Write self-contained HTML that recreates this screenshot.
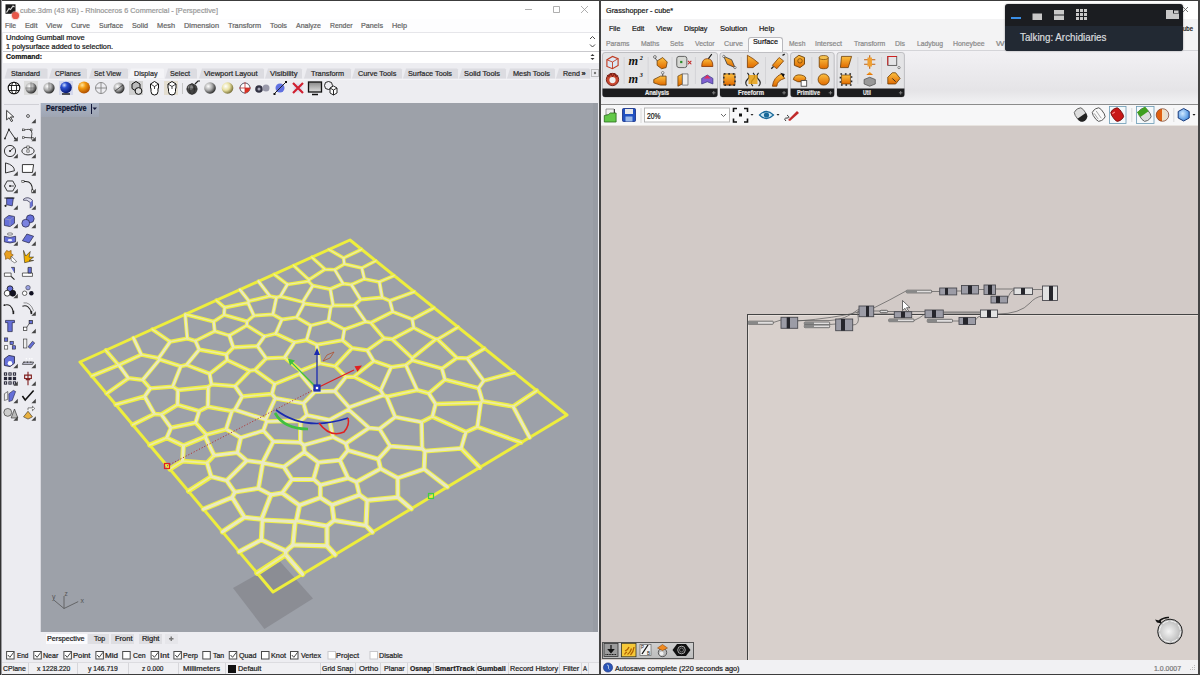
<!DOCTYPE html>
<html><head><meta charset="utf-8">
<style>
*{margin:0;padding:0;box-sizing:border-box}
html,body{width:1200px;height:675px;overflow:hidden;background:#ededf1;font-family:"Liberation Sans",sans-serif;}
.a{position:absolute}
.t{position:absolute;white-space:nowrap;line-height:1;-webkit-text-stroke:0.22px currentColor}
svg{position:absolute;overflow:visible}
</style></head><body>
<div class="a" style="left:0;top:0;width:1200px;height:675px;overflow:hidden">
<div class="a" style="left:0px;top:0px;width:600px;height:675px;background:#ededf1;"></div>
<div class="a" style="left:0px;top:0px;width:600px;height:19px;background:#fff;"></div>
<div class="a" style="left:0px;top:19px;width:600px;height:13px;background:#fdfdfe;"></div>
<svg style="left:0;top:0" width="30" height="30"><rect x="5.5" y="4.3" width="10" height="9.5" fill="#1a1a1a"/><path d="M6.5 12.5l2.5-4 1.5 1 2.5-3.5 1.5 1" stroke="#ddd" stroke-width="1.2" fill="none"/><circle cx="15.5" cy="15.5" r="4.8" fill="#f4b8b0" opacity="0.5"/><circle cx="15.5" cy="15.5" r="3.6" fill="#e8584a"/></svg>
<div class="t" style="left:20px;top:6.95px;font-size:7.5px;color:#9a9a9a;transform:scaleX(0.973);transform-origin:0 0;">cube.3dm (43 KB) - Rhinoceros 6 Commercial - [Perspective]</div>
<div class="t" style="left:5px;top:21.95px;font-size:7.5px;color:#666;transform:scaleX(0.910);transform-origin:0 0;">File</div>
<div class="t" style="left:25px;top:21.95px;font-size:7.5px;color:#666;transform:scaleX(0.967);transform-origin:0 0;">Edit</div>
<div class="t" style="left:46px;top:21.95px;font-size:7.5px;color:#666;transform:scaleX(0.993);transform-origin:0 0;">View</div>
<div class="t" style="left:71px;top:21.95px;font-size:7.5px;color:#666;transform:scaleX(0.950);transform-origin:0 0;">Curve</div>
<div class="t" style="left:99px;top:21.95px;font-size:7.5px;color:#666;transform:scaleX(0.929);transform-origin:0 0;">Surface</div>
<div class="t" style="left:132px;top:21.95px;font-size:7.5px;color:#666;transform:scaleX(0.959);transform-origin:0 0;">Solid</div>
<div class="t" style="left:157px;top:21.95px;font-size:7.5px;color:#666;transform:scaleX(0.982);transform-origin:0 0;">Mesh</div>
<div class="t" style="left:184px;top:21.95px;font-size:7.5px;color:#666;transform:scaleX(0.988);transform-origin:0 0;">Dimension</div>
<div class="t" style="left:228px;top:21.95px;font-size:7.5px;color:#666;transform:scaleX(0.974);transform-origin:0 0;">Transform</div>
<div class="t" style="left:270px;top:21.95px;font-size:7.5px;color:#666;transform:scaleX(0.971);transform-origin:0 0;">Tools</div>
<div class="t" style="left:296px;top:21.95px;font-size:7.5px;color:#666;transform:scaleX(0.937);transform-origin:0 0;">Analyze</div>
<div class="t" style="left:330px;top:21.95px;font-size:7.5px;color:#666;transform:scaleX(0.915);transform-origin:0 0;">Render</div>
<div class="t" style="left:361px;top:21.95px;font-size:7.5px;color:#666;transform:scaleX(0.959);transform-origin:0 0;">Panels</div>
<div class="t" style="left:392px;top:21.95px;font-size:7.5px;color:#666;transform:scaleX(0.972);transform-origin:0 0;">Help</div>
<svg style="left:0;top:0" width="600" height="20"><path d="M525 9.5h7M553.5 6.5h6v6h-6zM581 6l7 7M588 6l-7 7" stroke="#9a9a9a" stroke-width="0.8" fill="none"/></svg>
<div class="a" style="left:3px;top:32px;width:597px;height:31px;background:#fff;"></div>
<div class="a" style="left:3px;top:32px;width:597px;height:1px;background:#e6e6ea;"></div>
<div class="a" style="left:3px;top:51px;width:597px;height:1px;background:#c9c9cd;"></div>
<div class="t" style="left:6px;top:33.65px;font-size:7.5px;color:#1a1a1a;transform:scaleX(1.004);transform-origin:0 0;">Undoing Gumball move</div>
<div class="t" style="left:6px;top:43.15px;font-size:7.5px;color:#1a1a1a;transform:scaleX(0.976);transform-origin:0 0;">1 polysurface added to selection.</div>
<div class="t" style="left:6px;top:52.65px;font-size:7.5px;color:#111;font-weight:bold;transform:scaleX(0.919);transform-origin:0 0;">Command:</div>
<svg style="left:0;top:0" width="600" height="70"><path d="M590 39l2.5-2.5 2.5 2.5M590 44.5l2.5 2.5 2.5-2.5" stroke="#333" stroke-width="0.9" fill="none"/><path d="M590.5 56l2-2 2 2zM590.5 58l2 2 2-2z" fill="#333"/></svg>
<svg style="left:0;top:0" width="600" height="100"><path d="M4.5 78.5L7.5 68.5H46.5L47.5 69.5V78.5Z" fill="#dcdce1"/><path d="M49 78.5L52 68.5H86L87 69.5V78.5Z" fill="#dcdce1"/><path d="M89 78.5L92 68.5H127L128 69.5V78.5Z" fill="#dcdce1"/><path d="M128 78.5L131 68.5H163L164 69.5V78.5Z" fill="#f4f4f7"/><path d="M165 78.5L168 68.5H196L197 69.5V78.5Z" fill="#dcdce1"/><path d="M199 78.5L202 68.5H263L264 69.5V78.5Z" fill="#dcdce1"/><path d="M265 78.5L268 68.5H301L302 69.5V78.5Z" fill="#dcdce1"/><path d="M304 78.5L307 68.5H350L351 69.5V78.5Z" fill="#dcdce1"/><path d="M352 78.5L355 68.5H401L402 69.5V78.5Z" fill="#dcdce1"/><path d="M403 78.5L406 68.5H457L458 69.5V78.5Z" fill="#dcdce1"/><path d="M459 78.5L462 68.5H505L506 69.5V78.5Z" fill="#dcdce1"/><path d="M507 78.5L510 68.5H554L555 69.5V78.5Z" fill="#dcdce1"/><path d="M556 78.5L559 68.5H589L590 69.5V78.5Z" fill="#dcdce1"/></svg>
<div class="t" style="left:11px;top:69.65px;font-size:7.5px;color:#2a2a2a;transform:scaleX(0.953);transform-origin:0 0;">Standard</div>
<div class="t" style="left:54.5px;top:69.65px;font-size:7.5px;color:#2a2a2a;transform:scaleX(0.900);transform-origin:0 0;">CPlanes</div>
<div class="t" style="left:94px;top:69.65px;font-size:7.5px;color:#2a2a2a;transform:scaleX(0.916);transform-origin:0 0;">Set View</div>
<div class="t" style="left:134px;top:69.65px;font-size:7.5px;color:#2a2a2a;transform:scaleX(0.956);transform-origin:0 0;">Display</div>
<div class="t" style="left:170px;top:69.65px;font-size:7.5px;color:#2a2a2a;transform:scaleX(0.960);transform-origin:0 0;">Select</div>
<div class="t" style="left:204px;top:69.65px;font-size:7.5px;color:#2a2a2a;transform:scaleX(0.997);transform-origin:0 0;">Viewport Layout</div>
<div class="t" style="left:270px;top:69.65px;font-size:7.5px;color:#2a2a2a;transform:scaleX(1.020);transform-origin:0 0;">Visibility</div>
<div class="t" style="left:310.7px;top:69.65px;font-size:7.5px;color:#2a2a2a;transform:scaleX(0.974);transform-origin:0 0;">Transform</div>
<div class="t" style="left:357.7px;top:69.65px;font-size:7.5px;color:#2a2a2a;transform:scaleX(0.971);transform-origin:0 0;">Curve Tools</div>
<div class="t" style="left:408px;top:69.65px;font-size:7.5px;color:#2a2a2a;transform:scaleX(0.971);transform-origin:0 0;">Surface Tools</div>
<div class="t" style="left:464px;top:69.65px;font-size:7.5px;color:#2a2a2a;transform:scaleX(0.996);transform-origin:0 0;">Solid Tools</div>
<div class="t" style="left:512.7px;top:69.65px;font-size:7.5px;color:#2a2a2a;transform:scaleX(0.979);transform-origin:0 0;">Mesh Tools</div>
<div class="t" style="left:562.6px;top:69.65px;font-size:7.5px;color:#2a2a2a;transform:scaleX(0.943);transform-origin:0 0;">Rend</div>
<div class="t" style="left:581.5px;top:69.65px;font-size:7.5px;color:#222;font-weight:bold;">»</div>
<svg style="left:0;top:0" width="600" height="90"><rect x="591.5" y="69.5" width="7" height="7" fill="none" stroke="#777" stroke-width="0.8" stroke-dasharray="1 1"/><circle cx="595" cy="73" r="1.2" fill="#777"/></svg>
<div class="a" style="left:0px;top:79px;width:600px;height:1px;background:#f4f4f7;"></div>
<svg style="left:0;top:0" width="600" height="100">
<defs>
<radialGradient id="gsph" cx="0.35" cy="0.35" r="0.7"><stop offset="0" stop-color="#fff"/><stop offset="0.5" stop-color="#aaa"/><stop offset="1" stop-color="#222"/></radialGradient>
<radialGradient id="bsph" cx="0.35" cy="0.3" r="0.7"><stop offset="0" stop-color="#cfe0ff"/><stop offset="0.35" stop-color="#2a4fd0"/><stop offset="1" stop-color="#0a1a70"/></radialGradient>
<radialGradient id="osph" cx="0.35" cy="0.3" r="0.7"><stop offset="0" stop-color="#ffe6a0"/><stop offset="0.4" stop-color="#f29a10"/><stop offset="1" stop-color="#b05000"/></radialGradient>
<radialGradient id="ysph" cx="0.35" cy="0.35" r="0.7"><stop offset="0" stop-color="#fff"/><stop offset="0.5" stop-color="#e8e0a0"/><stop offset="1" stop-color="#706830"/></radialGradient>
<linearGradient id="mon" x1="0" y1="0" x2="0" y2="1"><stop offset="0" stop-color="#888"/><stop offset="1" stop-color="#ddd"/></linearGradient>
</defs>
<rect x="24" y="81" width="14" height="14" fill="#dcdcdc"/>
<rect x="59" y="81" width="14" height="14" fill="#d4d8ec"/>
<rect x="129" y="81" width="14" height="14" fill="#d0d0d0"/>
<rect x="164" y="81" width="14" height="14" fill="#e4ded0"/>
<g fill="#fff" stroke="#111" stroke-width="1.1"><circle cx="14" cy="88" r="5.8"/></g><g fill="none" stroke="#111" stroke-width="0.9"><ellipse cx="14" cy="88" rx="2.6" ry="5.8"/><path d="M8.6 85.5h10.8M8.6 90.5h10.8"/></g>
<circle cx="31" cy="88" r="5.6" fill="url(#gsph)"/><path d="M31 82.5v11M25.5 88h11" stroke="#555" stroke-width="0.5"/>
<circle cx="49" cy="88" r="5.6" fill="url(#gsph)"/><path d="M49 82.5v7" stroke="#555" stroke-width="0.5"/>
<circle cx="66" cy="87.5" r="5.8" fill="url(#bsph)"/><path d="M62 94h8" stroke="#222" stroke-width="1.5"/>
<circle cx="84" cy="87.5" r="6" fill="url(#osph)"/>
<g fill="none" stroke="#777" stroke-width="0.8"><circle cx="101" cy="88" r="5.5"/><path d="M101 82.5v11M95.5 88h11"/></g>
<circle cx="119" cy="88" r="5.5" fill="url(#gsph)"/><path d="M115 91l8-6" stroke="#333" stroke-width="0.8"/>
<g stroke="#111" stroke-width="1"><path d="M132 84l4-2.5 4 2.5v4.5l-4 2.5-4-2.5z" fill="#bbb"/><circle cx="138.5" cy="91" r="3.4" fill="#ddd"/></g>
<g stroke="#111" stroke-width="1"><path d="M150.5 84l4-2.5 4 2.5v4.5l-4 2.5-4-2.5z" fill="#fff"/><path d="M150.5 84l4 2.5 4-2.5M154.5 86.5v4" fill="none" stroke-width="0.8"/><path d="M151 89v2.5a3.5 3.5 0 0 0 7 0v-2.5" fill="#fff"/></g>
<g stroke="#111" stroke-width="1"><path d="M168 84l4-2.5 4 2.5v4.5l-4 2.5-4-2.5z" fill="#fff"/><path d="M168 84l4 2.5 4-2.5M172 86.5v4" fill="none" stroke-width="0.8"/><path d="M168.5 89v2.5a3.5 3.5 0 0 0 7 0v-2.5" fill="#fff"/></g>
<path d="M182.5 83v11" stroke="#bbb" stroke-width="0.8"/>
<circle cx="192" cy="89" r="5.5" fill="#444"/><circle cx="190.5" cy="87.5" r="2.5" fill="#888"/><g stroke="#222" stroke-width="0.6" fill="none"><ellipse cx="192" cy="89" rx="2.5" ry="5.5"/><path d="M186.5 89h11"/></g><path d="M195 84l3-3h2" stroke="#222" stroke-width="1.2" fill="none"/>
<circle cx="210" cy="88" r="5.8" fill="url(#gsph)"/>
<circle cx="227.5" cy="88" r="5.8" fill="url(#ysph)"/>
<circle cx="245" cy="88" r="5" fill="#fff" stroke="#334" stroke-width="0.8"/><path d="M245 88h5a5 5 0 0 1-5 5z" fill="#e03020"/><path d="M239 88h12M245 82v12" stroke="#c03030" stroke-width="0.8"/>
<circle cx="259" cy="89" r="3.8" fill="#334" /><circle cx="266" cy="88" r="3.5" fill="#99a"/><circle cx="259" cy="89" r="1.5" fill="#aab"/>
<circle cx="280" cy="88" r="4.5" fill="#6070e0"/><path d="M274 94l12-12" stroke="#222" stroke-width="1"/><rect x="273.5" y="93" width="2" height="2" fill="#111"/><rect x="285" y="81" width="2" height="2" fill="#111"/>
<circle cx="298" cy="88" r="4.5" fill="#dde" /><path d="M293 83l10 10M303 83l-10 10" stroke="#d02030" stroke-width="2.2"/>
<rect x="308.5" y="82" width="13" height="10" fill="url(#mon)" stroke="#111" stroke-width="1.3"/><path d="M312 94.5h6" stroke="#111" stroke-width="1.5"/>
<g fill="none" stroke="#111" stroke-width="0.9"><circle cx="328.5" cy="85.5" r="4"/><path d="M330 88l3.5-2 3.5 2v5l-3.5 2-3.5-2z" fill="#fff"/><path d="M330 88l3.5 2 3.5-2M333.5 90v5"/></g>
</svg>
<div class="a" style="left:2px;top:103px;width:39px;height:572px;background:#ececf1;"></div>
<div class="a" style="left:40px;top:103px;width:1px;height:529px;background:#d8d8de;"></div>
<div class="a" style="left:4px;top:104px;width:35px;height:1px;background:#d0d0d6;"></div>
<svg style="left:0;top:0" width="45" height="430"><g transform="translate(10,116) scale(1.12)"><path d="M-3-5v8.5l2.2-2 2 3.5 1.2-.7-2-3.4h3z" fill="#fff" stroke="#222" stroke-width="0.8"/></g><g transform="translate(28,116) scale(1.12)"><circle r="1.3" fill="none" stroke="#333" stroke-width="0.7"/><path d="M7 6.5V2.5L3 6.5z" fill="#444"/></g><g transform="translate(10,134) scale(1.12)"><path d="M-4.5 4L-1-4 4.5 4" fill="none" stroke="#222" stroke-width="0.8"/><circle cx="-4.5" cy="4" r="0.8" fill="#222"/><circle cx="-1" cy="-4" r="0.8" fill="#222"/><circle cx="4.5" cy="4" r="0.8" fill="#222"/><path d="M7 6.5V2.5L3 6.5z" fill="#444"/></g><g transform="translate(28,134) scale(1.12)"><path d="M-4-3.5Q2-5 3-3T3 3.5L-4 3" fill="none" stroke="#222" stroke-width="0.7"/><rect x="-5" y="-4.5" width="1.6" height="1.6" fill="#fff" stroke="#222" stroke-width="0.5"/><rect x="2" y="-4.5" width="1.6" height="1.6" fill="#fff" stroke="#222" stroke-width="0.5"/><rect x="-5" y="2.5" width="1.6" height="1.6" fill="#fff" stroke="#222" stroke-width="0.5"/><rect x="3" y="3" width="1.6" height="1.6" fill="#fff" stroke="#222" stroke-width="0.5"/><path d="M7 6.5V2.5L3 6.5z" fill="#444"/></g><g transform="translate(10,151) scale(1.12)"><circle r="5" fill="none" stroke="#222" stroke-width="0.8"/><path d="M0 0l3.5-3" stroke="#222" stroke-width="0.8"/><circle r="0.9" fill="#222"/><path d="M7 6.5V2.5L3 6.5z" fill="#444"/></g><g transform="translate(28,151) scale(1.12)"><ellipse rx="5.5" ry="3.5" fill="none" stroke="#222" stroke-width="0.8"/><rect x="-1" y="-1" width="2" height="2" fill="#fff" stroke="#222" stroke-width="0.5"/><rect x="-1" y="-4.5" width="2" height="2" fill="#fff" stroke="#222" stroke-width="0.5"/><path d="M7 6.5V2.5L3 6.5z" fill="#444"/></g><g transform="translate(10,168.5) scale(1.12)"><path d="M-4-5v9M-4-5Q4-3 4 2L-4 4" fill="none" stroke="#222" stroke-width="0.8"/><path d="M7 6.5V2.5L3 6.5z" fill="#444"/></g><g transform="translate(28,168.5) scale(1.12)"><path d="M-5-3.5h10l-1 7h-9z" fill="#fff" stroke="#222" stroke-width="0.8"/><path d="M7 6.5V2.5L3 6.5z" fill="#444"/></g><g transform="translate(10,186) scale(1.12)"><path d="M-2.5-4.5h5l2.5 4.5-2.5 4.5h-5l-2.5-4.5z" fill="none" stroke="#222" stroke-width="0.8"/><path d="M0 0h3.5" stroke="#222" stroke-width="0.7"/><circle r="0.8" fill="#222"/><path d="M7 6.5V2.5L3 6.5z" fill="#444"/></g><g transform="translate(28,186) scale(1.12)"><path d="M-5-4h3Q4-4 4 4" fill="none" stroke="#222" stroke-width="1"/><rect x="-5.5" y="-5" width="2" height="2" fill="#fff" stroke="#222" stroke-width="0.5"/><rect x="3" y="3.5" width="2" height="2" fill="#fff" stroke="#222" stroke-width="0.5"/><path d="M7 6.5V2.5L3 6.5z" fill="#444"/></g><g transform="translate(10,202.5) scale(1.12)"><path d="M-3-4l6 0-1 7-5-1z" fill="#6670d8" stroke="#1c1c3c" stroke-width="0.6"/><path d="M-5-4h9" stroke="#111" stroke-width="0.8"/><circle cx="-4" cy="3" r="1" fill="#222"/><path d="M7 6.5V2.5L3 6.5z" fill="#444"/></g><g transform="translate(28,202.5) scale(1.12)"><path d="M-4-3Q0-6 4-2v5l-2 2V0Q-1-3-4-2z" fill="#dde" stroke="#1c1c3c" stroke-width="0.6"/><path d="M2 0v5l2-2V-2" fill="#6670d8"/><path d="M7 6.5V2.5L3 6.5z" fill="#444"/></g><g transform="translate(10,221) scale(1.12)"><path d="M-5-2l4-3 5 1v6l-4 3-5-1z" fill="#6670d8" stroke="#1c1c3c" stroke-width="0.6"/><path d="M-5-2l5 1 4-3M0-1v6" fill="none" stroke="#aab" stroke-width="0.5"/><path d="M7 6.5V2.5L3 6.5z" fill="#444"/></g><g transform="translate(28,221) scale(1.12)"><circle cx="2" cy="-2" r="3.5" fill="#6670d8" stroke="#1c1c3c" stroke-width="0.6"/><circle cx="-2" cy="2" r="3.5" fill="#7a82e0" stroke="#1c1c3c" stroke-width="0.6"/><path d="M7 6.5V2.5L3 6.5z" fill="#444"/></g><g transform="translate(10,238.5) scale(1.12)"><ellipse cx="0" cy="-4" rx="2.5" ry="1" fill="none" stroke="#333" stroke-width="0.5"/><path d="M-5-2Q0 0 5-2v5Q0 5-5 3z" fill="#6670d8" stroke="#1c1c3c" stroke-width="0.6"/><ellipse cx="0" cy="1.5" rx="2" ry="1" fill="#eef"/><path d="M7 6.5V2.5L3 6.5z" fill="#444"/></g><g transform="translate(28,238.5) scale(1.12)"><path d="M-5 2l4-6 6 2-4 6z" fill="#6670d8" stroke="#1c1c3c" stroke-width="0.6"/><path d="M7 6.5V2.5L3 6.5z" fill="#444"/></g><g transform="translate(10,256) scale(1.12)"><path d="M-5-2l2-3 2 1 2-1v3l2 1-2 2-1 2-2-1-2 1v-2z" fill="#e8a020" stroke="#704000" stroke-width="0.5"/><path d="M1 0l5 5-2 1-3-2z" fill="#fff" stroke="#333" stroke-width="0.5"/></g><g transform="translate(28,256) scale(1.12)"><path d="M-4-5l2 5 4-4-1 5 4 0-4 3h4l-8 2z" fill="#f0b000" stroke="#222" stroke-width="0.5"/></g><g transform="translate(10,273) scale(1.12)"><path d="M-5 0h6v3h-6z" fill="#fff" stroke="#222" stroke-width="0.6"/><path d="M1-5h3v5" fill="#6670d8" stroke="#222" stroke-width="0.6"/><path d="M1 3l3 3" stroke="#222"/></g><g transform="translate(28,273) scale(1.12)"><path d="M-5 0h9v3h-9z" fill="#fff" stroke="#222" stroke-width="0.6"/><path d="M0-5h3v5h-3z" fill="#6670d8" stroke="#222" stroke-width="0.6"/></g><g transform="translate(10,291) scale(1.12)"><circle cx="0" cy="-2" r="2.6" fill="#6670d8" stroke="#111" stroke-width="0.7"/><circle cx="-2.5" cy="2" r="2.6" fill="#fff" stroke="#111" stroke-width="0.7"/><circle cx="2.5" cy="2" r="2.6" fill="#112" stroke="#111" stroke-width="0.7"/><path d="M7 6.5V2.5L3 6.5z" fill="#444"/></g><g transform="translate(28,291) scale(1.12)"><circle cx="0" cy="-3" r="2" fill="#99a0e0" stroke="#334" stroke-width="0.5"/><circle cx="-3" cy="2" r="2" fill="#fff" stroke="#222" stroke-width="0.6"/><circle cx="3" cy="2" r="2" fill="#112"/></g><g transform="translate(10,308.5) scale(1.12)"><path d="M-5-3Q1-5 3 3" fill="none" stroke="#222" stroke-width="0.9"/><circle cx="-5" cy="-3" r="0.8" fill="#222"/><path d="M3 2v3" stroke="#222" stroke-width="1.5"/></g><g transform="translate(28,308.5) scale(1.12)"><path d="M-5-2Q1-4 3 4" fill="none" stroke="#222" stroke-width="0.9"/><path d="M-4-5Q2-6 5 2" fill="none" stroke="#444" stroke-width="0.5"/><path d="M3 2v3" stroke="#222" stroke-width="1.5"/><path d="M7 6.5V2.5L3 6.5z" fill="#444"/></g><g transform="translate(10,326) scale(1.12)"><path d="M-4-5h8v2h-2v8h-4v-8h-2z" fill="#6670d8" stroke="#1c1c3c" stroke-width="0.6"/></g><g transform="translate(28,326) scale(1.12)"><rect x="1" y="-5" width="3" height="3" fill="#6670d8" stroke="#222" stroke-width="0.6"/><rect x="-4" y="1" width="3" height="3" fill="#fff" stroke="#222" stroke-width="0.6"/><path d="M-1 1l2-3" stroke="#222" stroke-width="0.6"/><path d="M7 6.5V2.5L3 6.5z" fill="#444"/></g><g transform="translate(10,343.5) scale(1.12)"><rect x="-5" y="-5" width="3" height="3" fill="#6670d8" stroke="#222" stroke-width="0.5"/><rect x="-5" y="2" width="3" height="3" fill="#fff" stroke="#222" stroke-width="0.5"/><rect x="0" y="-2" width="3" height="3" fill="#6670d8" stroke="#222" stroke-width="0.5"/><rect x="2" y="2" width="3" height="3" fill="#6670d8" stroke="#222" stroke-width="0.5"/></g><g transform="translate(28,343.5) scale(1.12)"><rect x="-4" y="-4" width="3" height="8" fill="#eee" stroke="#222" stroke-width="0.5"/><path d="M0 3l4-5 2 1.5-4 5z" fill="#6670d8" stroke="#222" stroke-width="0.5"/></g><g transform="translate(10,361) scale(1.12)"><path d="M-5-2l4-3 5 1v6l-4 3-5-1z" fill="#6670d8" stroke="#1c1c3c" stroke-width="0.7"/><circle cx="0" cy="2" r="2" fill="#fff"/><path d="M7 6.5V2.5L3 6.5z" fill="#444"/></g><g transform="translate(28,361) scale(1.12)"><path d="M-5 3h9l1-2h-9z" fill="#ccd" stroke="#222" stroke-width="0.6"/><path d="M-2-2h1M1-2h1M3-2h1" stroke="#fff" stroke-width="1.2"/><path d="M-4 1h1M-1 1h1M2 1h1" stroke="#222" stroke-width="0.8"/><path d="M7 6.5V2.5L3 6.5z" fill="#444"/></g><g transform="translate(10,378.5) scale(1.12)"><g fill="#fff" stroke="#223" stroke-width="0.9"><rect x="-5" y="-5" width="2" height="2"/><rect x="-1" y="-5" width="2" height="2"/><rect x="3" y="-5" width="2" height="2"/><rect x="-5" y="-1" width="2" height="2" fill="#223"/><rect x="-1" y="-1" width="2" height="2" fill="#223"/><rect x="3" y="-1" width="2" height="2" fill="#223"/><rect x="-5" y="3" width="2" height="2"/><rect x="-1" y="3" width="2" height="2"/><rect x="3" y="3" width="2" height="2"/></g><path d="M7 6.5V2.5L3 6.5z" fill="#444"/></g><g transform="translate(28,378.5) scale(1.12)"><path d="M0-6v12M-3-3h6v3h-6zM-2 1h4" fill="none" stroke="#802020" stroke-width="1"/><path d="M7 6.5V2.5L3 6.5z" fill="#444"/></g><g transform="translate(10,396) scale(1.12)"><path d="M-5-2l3-2v7l-3 1z" fill="#eee" stroke="#222" stroke-width="0.5"/><path d="M-1-2l4-3 2 1-3 8-3 1z" fill="#6670d8" stroke="#1c1c3c" stroke-width="0.5"/><path d="M7 6.5V2.5L3 6.5z" fill="#444"/></g><g transform="translate(28,396) scale(1.12)"><path d="M-5 0l2.5 3.5L5-5" fill="none" stroke="#111" stroke-width="1.4"/><path d="M7 6.5V2.5L3 6.5z" fill="#444"/></g><g transform="translate(10,413.5) scale(1.12)"><circle cx="-2" cy="-1" r="3.5" fill="#ccc" stroke="#333" stroke-width="0.6"/><path d="M1 4l3-8 3 8z" fill="#bbb" stroke="#333" stroke-width="0.6"/><path d="M7 6.5V2.5L3 6.5z" fill="#444"/></g><g transform="translate(28,413.5) scale(1.12)"><path d="M-4 3l4-5 4 5-4 2z" fill="#e8b040" stroke="#222" stroke-width="0.5"/><path d="M0-3v-2h4v-1.5l2 2-2 2v-1.5" fill="#fff" stroke="#222" stroke-width="0.5"/><path d="M7 6.5V2.5L3 6.5z" fill="#444"/></g></svg>
<div class="a" style="left:41px;top:103px;width:557px;height:529px;background:#9da1a9;"></div>
<div class="a" style="left:593px;top:103px;width:5px;height:529px;background:#989ca4;"></div>
<svg style="left:0;top:0" width="1200" height="675"><path d="M233 588L280 561.5L313 598.5L264.4 629Z" fill="#8b8d94"/><g stroke="#555" stroke-width="0.8" fill="none"><path d="M64 608.5L53.3 599.6M64 608.5V596M64 608.5L78.2 601.6"/></g><text x="52" y="599" font-size="7" fill="#555" font-family="Liberation Sans">y</text><text x="64.5" y="596" font-size="6.5" fill="#555" font-family="Liberation Sans">z</text><text x="80.5" y="603" font-size="7" fill="#555" font-family="Liberation Sans">x</text><path d="M80 362L350 240L567 415L273 592Z" fill="none" stroke="#eeee3c" stroke-width="3" stroke-linejoin="round"/><g fill="none" stroke-linecap="round"><path d="M325.1 269.3L334.7 269.7M325.1 269.3L308.9 279.7M312.8 285.7L308.5 281.3M343.1 283.6L334.7 269.7M308.9 279.7L308.5 281.3M308.5 281.3L287.4 284.4M364.4 278.9L379.4 281.9M364.4 278.9L361.8 268.0M361.8 268.0L375.8 260.8M379.4 281.9L394.1 275.6M351.4 284.7L364.4 278.9M334.7 269.7L344.3 264.0M344.3 264.0L361.8 268.0M343.6 258.0L344.3 264.0M343.6 258.0L361.6 249.4M325.1 269.3L311.9 257.2M343.6 258.0L328.9 249.5M308.9 279.7L293.6 265.5M287.4 284.4L274.1 274.3" stroke="#efef42" stroke-width="3.53"/><path d="M275.7 333.6L281.9 319.5M281.9 319.5L296.7 317.3M296.7 317.3L310.7 325.5M310.7 325.5L306.6 340.1M392.1 339.2L413.7 327.8M413.7 327.8L435.9 339.2M384.2 338.4L370.8 322.7M370.8 322.7L392.7 311.7M392.7 311.7L412.3 319.3M413.7 327.8L412.3 319.3M389.8 300.8L414.3 291.8M392.7 311.7L389.8 300.8M412.3 319.3L434.0 307.8M437.5 339.3L458.0 327.1M275.7 333.6L264.4 336.4M152.3 329.3L170.1 341.7M312.8 285.7L330.3 289.1M330.3 289.1L343.1 283.6M365.6 321.7L344.4 329.4M365.6 321.7L354.3 305.3M344.4 329.4L328.5 321.0M328.5 321.0L330.8 306.8M354.3 305.3L333.1 305.5M333.1 305.5L330.8 306.8M370.8 322.7L365.6 321.7M342.6 340.3L344.4 329.4M382.1 297.5L360.6 299.5M360.6 299.5L354.3 305.3M389.8 300.8L382.1 297.5M310.7 325.5L328.5 321.0M296.7 317.3L304.0 303.5M304.0 303.5L330.8 306.8M330.3 289.1L333.1 305.5M351.4 284.7L360.6 299.5M343.1 283.6L351.4 284.7M312.8 285.7L302.8 302.0M302.8 302.0L304.0 303.5M253.9 315.6L248.0 302.8M253.9 315.6L247.0 321.4M248.0 302.8L224.6 307.5M224.6 307.5L224.0 314.8M224.0 314.8L247.0 321.4M281.9 319.5L272.9 314.3M253.9 315.6L272.9 314.3M264.4 336.4L246.8 325.4M247.0 321.4L246.8 325.4M249.0 301.1L240.0 289.7M249.0 301.1L248.0 302.8M224.6 307.5L216.3 300.4M302.8 302.0L280.4 296.4M287.4 284.4L280.4 296.4M249.0 301.1L269.9 296.1M272.9 314.3L276.4 297.5M269.9 296.1L276.4 297.5M280.4 296.4L276.4 297.5M382.1 297.5L379.4 281.9M213.7 321.6L185.5 314.3M224.0 314.8L213.7 321.6M187.3 338.5L185.2 314.5M269.9 296.1L258.5 281.3M195.4 340.9L214.7 331.2M214.7 331.2L229.3 335.5M213.7 321.6L214.7 331.2M246.8 325.4L229.3 335.5" stroke="#efef42" stroke-width="3.85"/><path d="M299.8 373.7L274.6 384.0M299.8 373.7L300.9 370.8M284.6 357.5L300.9 370.8M274.6 384.0L254.9 370.0M284.6 357.5L266.2 358.4M266.2 358.4L254.9 370.0M275.7 333.6L294.5 342.3M294.5 342.3L306.6 340.1M284.6 357.5L294.5 342.3M300.9 370.8L319.4 363.3M319.4 363.3L316.7 344.7M316.7 344.7L306.6 340.1M335.1 366.2L319.4 363.3M335.1 366.2L352.1 348.1M352.1 348.1L342.6 340.3M316.7 344.7L342.6 340.3M412.2 358.1L392.1 339.2M412.2 358.1L435.9 339.2M392.1 339.2L384.2 338.4M457.0 357.9L467.4 358.4M457.0 357.9L437.5 339.3M467.4 358.4L484.5 348.5M483.7 380.8L514.3 372.5M483.7 380.8L467.4 358.4M435.9 339.2L437.5 339.3M412.2 358.1L412.2 360.2M457.0 357.9L441.9 368.6M441.9 368.6L412.2 360.2M373.7 361.1L391.2 367.1M391.2 367.1L405.8 365.1M384.2 338.4L367.3 350.4M367.3 350.4L373.7 361.1M412.2 360.2L405.8 365.1M266.2 358.4L257.4 346.1M264.4 336.4L257.4 346.1M158.7 358.1L170.1 341.7M141.4 354.7L133.4 337.9M158.7 358.1L141.4 354.7M367.3 350.4L352.1 348.1M250.0 370.8L235.0 386.1M254.9 370.0L250.0 370.8M299.8 373.7L314.9 391.7M417.2 390.1L405.8 365.1M441.9 368.6L445.0 379.6M428.7 393.3L445.0 379.6M483.7 380.8L478.6 388.1M445.0 379.6L478.6 388.1M118.8 365.0L118.5 365.0M118.8 365.0L128.4 378.2M118.5 365.0L91.8 376.0M128.4 378.2L106.5 393.6M141.4 354.7L118.8 365.0M158.7 358.1L159.6 359.5M142.7 379.9L159.6 359.5M142.7 379.9L128.4 378.2M142.7 379.9L150.2 388.4M118.5 365.0L105.8 350.3M380.6 390.4L353.9 376.6M334.7 391.1L346.0 376.9M346.0 376.9L353.9 376.6M373.7 361.1L353.9 376.6M391.2 367.1L380.6 390.4M335.1 366.2L346.0 376.9M170.1 341.7L187.3 338.5M186.6 364.9L209.6 373.8M186.6 364.9L180.8 366.3M180.8 366.3L172.7 386.6M209.6 373.8L211.5 384.3M177.9 390.1L172.7 386.6M208.2 387.0L211.5 384.3M150.2 388.4L172.7 386.6M159.6 359.5L180.8 366.3M250.0 370.8L227.2 360.1M235.0 386.1L211.5 384.3M227.2 360.1L209.6 373.8M199.2 349.6L226.3 354.4M199.2 349.6L195.4 340.9M229.3 335.5L233.3 347.4M233.3 347.4L226.3 354.4M227.2 360.1L226.3 354.4M186.6 364.9L199.2 349.6M187.3 338.5L195.4 340.9M257.4 346.1L233.3 347.4" stroke="#efef42" stroke-width="4.18"/><path d="M333.0 437.0L303.8 445.1M329.4 419.9L306.9 415.3M329.4 419.9L333.0 437.0M300.3 442.4L300.4 420.8M300.4 420.8L306.9 415.3M206.4 434.6L195.6 422.8M206.4 434.6L205.2 436.8M195.6 422.8L171.0 427.8M171.0 427.8L166.7 437.9M132.7 424.8L154.4 413.9M115.7 404.6L144.6 396.5M144.6 396.5L154.4 413.9M171.0 427.8L161.3 414.5M199.2 411.1L195.6 422.8M199.2 411.1L177.5 404.8M177.5 404.8L161.3 414.5M274.6 384.0L271.9 394.0M235.0 386.1L242.2 396.5M242.2 396.5L271.9 394.0M314.9 391.7L303.5 403.2M303.5 403.2L275.3 398.2M271.9 394.0L275.3 398.2M154.4 413.9L161.3 414.5M421.6 422.1L432.4 416.6M432.4 416.6L465.9 432.0M421.6 422.1L422.1 448.7M465.9 432.0L461.1 448.4M386.7 396.6L395.2 417.0M395.2 417.0L421.6 422.1M432.4 416.6L435.6 404.0M417.2 390.1L428.7 393.3M417.2 390.1L386.7 396.6M435.6 404.0L428.7 393.3M144.6 396.5L150.2 388.4M231.9 411.1L234.9 409.8M231.9 411.1L226.1 429.2M234.9 409.8L265.6 419.6M226.1 429.2L240.7 437.7M240.7 437.7L263.4 430.6M263.4 430.6L266.6 421.5M266.6 421.5L265.6 419.6M199.2 411.1L207.9 406.7M207.9 406.7L231.9 411.1M206.4 434.6L226.1 429.2M275.3 398.2L265.6 419.6M242.2 396.5L234.9 409.8M273.3 441.4L263.4 430.6M300.4 420.8L266.6 421.5M303.5 403.2L306.9 415.3M380.6 390.4L383.4 395.2M383.4 395.2L349.1 407.3M349.1 407.3L334.7 391.1M386.7 396.6L383.4 395.2M329.4 419.9L348.6 409.6M314.9 391.7L334.7 391.1M348.6 409.6L349.1 407.3M390.1 446.1L379.5 428.9M379.5 428.9L369.1 427.9M369.1 427.9L345.8 443.5M395.2 417.0L379.5 428.9M348.6 409.6L369.1 427.9M333.0 437.0L345.8 443.5M465.9 432.0L477.4 426.9M435.6 404.0L480.7 402.7M477.4 426.9L480.7 402.7M478.6 388.1L482.4 401.2M536.8 390.7L513.1 406.4M513.1 406.4L482.4 401.2M482.4 401.2L480.7 402.7M177.9 390.1L208.2 387.0M177.5 404.8L177.9 390.1M207.9 406.7L208.2 387.0M513.1 406.4L529.6 437.5M477.4 426.9L521.2 442.5" stroke="#efef42" stroke-width="4.52"/><path d="M283.8 466.9L262.8 462.9M283.8 466.9L304.4 452.0M304.4 452.0L303.8 445.1M300.3 442.4L303.8 445.1M273.3 441.4L262.6 462.7M273.3 441.4L300.3 442.4M262.6 462.7L262.8 462.9M283.8 466.9L292.0 479.5M271.0 494.8L258.4 488.3M258.4 488.3L262.8 462.9M292.0 479.5L282.2 493.0M234.7 492.2L258.4 488.3M234.7 492.2L226.7 480.6M262.6 462.7L246.7 460.7M246.7 460.7L226.7 480.6M205.2 436.8L183.4 445.7M205.2 436.8L214.1 455.4M183.4 445.7L182.6 461.1M182.6 461.1L207.0 462.9M214.1 455.4L207.0 462.9M211.2 476.6L226.7 480.6M237.3 452.6L246.7 460.7M237.3 452.6L214.1 455.4M211.2 476.6L207.0 462.9M183.4 445.7L166.7 437.9M166.7 437.9L149.7 445.0M211.2 476.6L188.4 491.1M182.6 461.1L169.9 469.1M422.1 448.7L424.9 451.1M424.9 451.1L461.1 448.4M304.4 452.0L318.3 462.4M292.0 479.5L313.5 479.2M318.3 462.4L313.5 479.2M237.3 452.6L240.7 437.7M390.1 446.1L378.3 459.1M378.3 459.1L347.9 450.3M345.8 443.5L347.9 450.3M422.1 448.7L390.1 446.1M318.3 462.4L339.9 460.2M339.9 460.2L347.9 450.3M424.1 469.1L424.9 451.1M424.1 469.1L397.7 478.0M378.3 459.1L380.6 468.7M397.7 478.0L380.6 468.7M447.4 487.0L424.1 469.1M397.7 478.0L397.8 497.3M461.1 448.4L479.8 467.5M359.5 495.0L356.4 482.0M348.0 478.1L320.3 485.2M348.0 478.1L356.4 482.0M320.3 497.6L320.3 485.2M380.6 468.7L356.4 482.0M339.9 460.2L348.0 478.1M313.5 479.2L320.3 485.2" stroke="#efef42" stroke-width="4.87"/><path d="M262.4 520.0L295.1 521.7M262.4 520.0L261.4 539.8M292.9 544.9L295.1 521.7M261.4 539.8L285.8 551.0M295.1 521.7L296.4 520.8M296.4 520.8L299.5 505.3M262.4 520.0L261.5 519.2M261.5 519.2L271.0 494.8M271.0 494.8L282.2 493.0M299.5 505.3L282.2 493.0M261.4 539.8L239.2 551.7M296.4 520.8L327.0 526.1M292.9 544.9L327.0 545.8M327.0 526.1L327.0 545.8M244.5 517.3L222.5 531.8M244.5 517.3L232.1 497.4M232.1 497.4L203.5 509.1M261.5 519.2L244.5 517.3M234.7 492.2L232.1 497.4M411.3 508.7L397.8 497.3M372.4 532.1L366.0 525.5M397.8 497.3L367.1 500.3M367.1 500.3L366.0 525.5M327.0 526.1L334.0 520.4M366.0 525.5L334.0 520.4M359.5 495.0L332.0 505.0M332.0 505.0L320.3 497.6M367.1 500.3L359.5 495.0M334.0 520.4L332.0 505.0M299.5 505.3L320.3 497.6" stroke="#efef42" stroke-width="5.23"/><path d="M292.9 544.9L285.8 551.0M285.5 554.7L257.1 573.1M302.5 574.2L285.5 554.7M285.5 554.7L285.8 551.0M327.0 545.8L335.0 554.7" stroke="#efef42" stroke-width="5.60"/><path d="M343.1 283.6L334.7 269.7M308.9 279.7L308.5 281.3M364.4 278.9L361.8 268.0M343.6 258.0L344.3 264.0" stroke="#e9e9c4" stroke-width="2.08"/><path d="M325.1 269.3L334.7 269.7M325.1 269.3L308.9 279.7M312.8 285.7L308.5 281.3M308.5 281.3L287.4 284.4M364.4 278.9L379.4 281.9M361.8 268.0L375.8 260.8M379.4 281.9L394.1 275.6M351.4 284.7L364.4 278.9M334.7 269.7L344.3 264.0M344.3 264.0L361.8 268.0M343.6 258.0L361.6 249.4M325.1 269.3L311.9 257.2M343.6 258.0L328.9 249.5M308.9 279.7L293.6 265.5M287.4 284.4L274.1 274.3" stroke="#ebeba6" stroke-width="1.33"/><path d="M275.7 333.6L281.9 319.5M310.7 325.5L306.6 340.1M413.7 327.8L412.3 319.3M392.7 311.7L389.8 300.8M365.6 321.7L354.3 305.3M328.5 321.0L330.8 306.8M342.6 340.3L344.4 329.4M296.7 317.3L304.0 303.5M330.3 289.1L333.1 305.5M351.4 284.7L360.6 299.5M312.8 285.7L302.8 302.0M302.8 302.0L304.0 303.5M253.9 315.6L248.0 302.8M224.6 307.5L224.0 314.8M247.0 321.4L246.8 325.4M249.0 301.1L240.0 289.7M249.0 301.1L248.0 302.8M287.4 284.4L280.4 296.4M272.9 314.3L276.4 297.5M382.1 297.5L379.4 281.9M187.3 338.5L185.2 314.5M269.9 296.1L258.5 281.3M213.7 321.6L214.7 331.2" stroke="#e9e9c4" stroke-width="2.27"/><path d="M281.9 319.5L296.7 317.3M296.7 317.3L310.7 325.5M392.1 339.2L413.7 327.8M413.7 327.8L435.9 339.2M384.2 338.4L370.8 322.7M370.8 322.7L392.7 311.7M392.7 311.7L412.3 319.3M389.8 300.8L414.3 291.8M412.3 319.3L434.0 307.8M437.5 339.3L458.0 327.1M275.7 333.6L264.4 336.4M152.3 329.3L170.1 341.7M312.8 285.7L330.3 289.1M330.3 289.1L343.1 283.6M365.6 321.7L344.4 329.4M344.4 329.4L328.5 321.0M354.3 305.3L333.1 305.5M333.1 305.5L330.8 306.8M370.8 322.7L365.6 321.7M382.1 297.5L360.6 299.5M360.6 299.5L354.3 305.3M389.8 300.8L382.1 297.5M310.7 325.5L328.5 321.0M304.0 303.5L330.8 306.8M343.1 283.6L351.4 284.7M253.9 315.6L247.0 321.4M248.0 302.8L224.6 307.5M224.0 314.8L247.0 321.4M281.9 319.5L272.9 314.3M253.9 315.6L272.9 314.3M264.4 336.4L246.8 325.4M224.6 307.5L216.3 300.4M302.8 302.0L280.4 296.4M249.0 301.1L269.9 296.1M269.9 296.1L276.4 297.5M280.4 296.4L276.4 297.5M213.7 321.6L185.5 314.3M224.0 314.8L213.7 321.6M195.4 340.9L214.7 331.2M214.7 331.2L229.3 335.5M246.8 325.4L229.3 335.5" stroke="#ebeba6" stroke-width="1.45"/><path d="M299.8 373.7L300.9 370.8M284.6 357.5L294.5 342.3M319.4 363.3L316.7 344.7M483.7 380.8L467.4 358.4M412.2 358.1L412.2 360.2M367.3 350.4L373.7 361.1M266.2 358.4L257.4 346.1M264.4 336.4L257.4 346.1M158.7 358.1L170.1 341.7M141.4 354.7L133.4 337.9M299.8 373.7L314.9 391.7M417.2 390.1L405.8 365.1M441.9 368.6L445.0 379.6M483.7 380.8L478.6 388.1M118.8 365.0L128.4 378.2M158.7 358.1L159.6 359.5M142.7 379.9L159.6 359.5M334.7 391.1L346.0 376.9M391.2 367.1L380.6 390.4M180.8 366.3L172.7 386.6M209.6 373.8L211.5 384.3M199.2 349.6L195.4 340.9M229.3 335.5L233.3 347.4M227.2 360.1L226.3 354.4M186.6 364.9L199.2 349.6" stroke="#e9e9c4" stroke-width="2.47"/><path d="M299.8 373.7L274.6 384.0M284.6 357.5L300.9 370.8M274.6 384.0L254.9 370.0M284.6 357.5L266.2 358.4M266.2 358.4L254.9 370.0M275.7 333.6L294.5 342.3M294.5 342.3L306.6 340.1M300.9 370.8L319.4 363.3M316.7 344.7L306.6 340.1M335.1 366.2L319.4 363.3M335.1 366.2L352.1 348.1M352.1 348.1L342.6 340.3M316.7 344.7L342.6 340.3M412.2 358.1L392.1 339.2M412.2 358.1L435.9 339.2M392.1 339.2L384.2 338.4M457.0 357.9L467.4 358.4M457.0 357.9L437.5 339.3M467.4 358.4L484.5 348.5M483.7 380.8L514.3 372.5M435.9 339.2L437.5 339.3M457.0 357.9L441.9 368.6M441.9 368.6L412.2 360.2M373.7 361.1L391.2 367.1M391.2 367.1L405.8 365.1M384.2 338.4L367.3 350.4M412.2 360.2L405.8 365.1M158.7 358.1L141.4 354.7M367.3 350.4L352.1 348.1M250.0 370.8L235.0 386.1M254.9 370.0L250.0 370.8M428.7 393.3L445.0 379.6M445.0 379.6L478.6 388.1M118.8 365.0L118.5 365.0M118.5 365.0L91.8 376.0M128.4 378.2L106.5 393.6M141.4 354.7L118.8 365.0M142.7 379.9L128.4 378.2M142.7 379.9L150.2 388.4M118.5 365.0L105.8 350.3M380.6 390.4L353.9 376.6M346.0 376.9L353.9 376.6M373.7 361.1L353.9 376.6M335.1 366.2L346.0 376.9M170.1 341.7L187.3 338.5M186.6 364.9L209.6 373.8M186.6 364.9L180.8 366.3M177.9 390.1L172.7 386.6M208.2 387.0L211.5 384.3M150.2 388.4L172.7 386.6M159.6 359.5L180.8 366.3M250.0 370.8L227.2 360.1M235.0 386.1L211.5 384.3M227.2 360.1L209.6 373.8M199.2 349.6L226.3 354.4M233.3 347.4L226.3 354.4M187.3 338.5L195.4 340.9M257.4 346.1L233.3 347.4" stroke="#ebeba6" stroke-width="1.57"/><path d="M333.0 437.0L303.8 445.1M329.4 419.9L306.9 415.3M329.4 419.9L333.0 437.0M300.3 442.4L300.4 420.8M300.4 420.8L306.9 415.3M206.4 434.6L205.2 436.8M171.0 427.8L166.7 437.9M144.6 396.5L154.4 413.9M171.0 427.8L161.3 414.5M199.2 411.1L195.6 422.8M274.6 384.0L271.9 394.0M235.0 386.1L242.2 396.5M314.9 391.7L303.5 403.2M303.5 403.2L275.3 398.2M271.9 394.0L275.3 398.2M421.6 422.1L422.1 448.7M465.9 432.0L461.1 448.4M386.7 396.6L395.2 417.0M395.2 417.0L421.6 422.1M432.4 416.6L435.6 404.0M435.6 404.0L428.7 393.3M144.6 396.5L150.2 388.4M231.9 411.1L226.1 429.2M234.9 409.8L265.6 419.6M226.1 429.2L240.7 437.7M240.7 437.7L263.4 430.6M263.4 430.6L266.6 421.5M266.6 421.5L265.6 419.6M275.3 398.2L265.6 419.6M242.2 396.5L234.9 409.8M273.3 441.4L263.4 430.6M300.4 420.8L266.6 421.5M303.5 403.2L306.9 415.3M380.6 390.4L383.4 395.2M383.4 395.2L349.1 407.3M349.1 407.3L334.7 391.1M329.4 419.9L348.6 409.6M314.9 391.7L334.7 391.1M348.6 409.6L349.1 407.3M390.1 446.1L379.5 428.9M379.5 428.9L369.1 427.9M369.1 427.9L345.8 443.5M395.2 417.0L379.5 428.9M348.6 409.6L369.1 427.9M333.0 437.0L345.8 443.5M477.4 426.9L480.7 402.7M478.6 388.1L482.4 401.2M177.5 404.8L177.9 390.1M207.9 406.7L208.2 387.0M513.1 406.4L529.6 437.5" stroke="#e9e9c4" stroke-width="2.67"/><path d="M206.4 434.6L195.6 422.8M195.6 422.8L171.0 427.8M132.7 424.8L154.4 413.9M115.7 404.6L144.6 396.5M199.2 411.1L177.5 404.8M177.5 404.8L161.3 414.5M242.2 396.5L271.9 394.0M154.4 413.9L161.3 414.5M421.6 422.1L432.4 416.6M432.4 416.6L465.9 432.0M417.2 390.1L428.7 393.3M417.2 390.1L386.7 396.6M231.9 411.1L234.9 409.8M199.2 411.1L207.9 406.7M207.9 406.7L231.9 411.1M206.4 434.6L226.1 429.2M386.7 396.6L383.4 395.2M465.9 432.0L477.4 426.9M435.6 404.0L480.7 402.7M536.8 390.7L513.1 406.4M513.1 406.4L482.4 401.2M482.4 401.2L480.7 402.7M177.9 390.1L208.2 387.0M477.4 426.9L521.2 442.5" stroke="#ebeba6" stroke-width="1.70"/><path d="M283.8 466.9L262.8 462.9M283.8 466.9L304.4 452.0M304.4 452.0L303.8 445.1M300.3 442.4L303.8 445.1M273.3 441.4L262.6 462.7M273.3 441.4L300.3 442.4M262.6 462.7L262.8 462.9M283.8 466.9L292.0 479.5M271.0 494.8L258.4 488.3M258.4 488.3L262.8 462.9M292.0 479.5L282.2 493.0M234.7 492.2L258.4 488.3M234.7 492.2L226.7 480.6M262.6 462.7L246.7 460.7M246.7 460.7L226.7 480.6M205.2 436.8L214.1 455.4M183.4 445.7L182.6 461.1M211.2 476.6L226.7 480.6M237.3 452.6L246.7 460.7M237.3 452.6L214.1 455.4M211.2 476.6L207.0 462.9M422.1 448.7L424.9 451.1M424.9 451.1L461.1 448.4M304.4 452.0L318.3 462.4M292.0 479.5L313.5 479.2M318.3 462.4L313.5 479.2M237.3 452.6L240.7 437.7M390.1 446.1L378.3 459.1M378.3 459.1L347.9 450.3M345.8 443.5L347.9 450.3M422.1 448.7L390.1 446.1M318.3 462.4L339.9 460.2M339.9 460.2L347.9 450.3M424.1 469.1L424.9 451.1M424.1 469.1L397.7 478.0M378.3 459.1L380.6 468.7M397.7 478.0L380.6 468.7M447.4 487.0L424.1 469.1M397.7 478.0L397.8 497.3M359.5 495.0L356.4 482.0M348.0 478.1L320.3 485.2M348.0 478.1L356.4 482.0M320.3 497.6L320.3 485.2M380.6 468.7L356.4 482.0M339.9 460.2L348.0 478.1M313.5 479.2L320.3 485.2" stroke="#e9e9c4" stroke-width="2.87"/><path d="M205.2 436.8L183.4 445.7M182.6 461.1L207.0 462.9M214.1 455.4L207.0 462.9M183.4 445.7L166.7 437.9M166.7 437.9L149.7 445.0M211.2 476.6L188.4 491.1M182.6 461.1L169.9 469.1M461.1 448.4L479.8 467.5" stroke="#ebeba6" stroke-width="1.83"/><path d="M262.4 520.0L295.1 521.7M262.4 520.0L261.4 539.8M292.9 544.9L295.1 521.7M261.4 539.8L285.8 551.0M295.1 521.7L296.4 520.8M296.4 520.8L299.5 505.3M262.4 520.0L261.5 519.2M261.5 519.2L271.0 494.8M271.0 494.8L282.2 493.0M299.5 505.3L282.2 493.0M261.4 539.8L239.2 551.7M296.4 520.8L327.0 526.1M292.9 544.9L327.0 545.8M327.0 526.1L327.0 545.8M244.5 517.3L222.5 531.8M244.5 517.3L232.1 497.4M232.1 497.4L203.5 509.1M261.5 519.2L244.5 517.3M234.7 492.2L232.1 497.4M411.3 508.7L397.8 497.3M372.4 532.1L366.0 525.5M397.8 497.3L367.1 500.3M367.1 500.3L366.0 525.5M327.0 526.1L334.0 520.4M366.0 525.5L334.0 520.4M359.5 495.0L332.0 505.0M332.0 505.0L320.3 497.6M367.1 500.3L359.5 495.0M334.0 520.4L332.0 505.0M299.5 505.3L320.3 497.6" stroke="#e9e9c4" stroke-width="3.08"/><path d="" stroke="#ebeba6" stroke-width="1.96"/><path d="M292.9 544.9L285.8 551.0M302.5 574.2L285.5 554.7M285.5 554.7L285.8 551.0M327.0 545.8L335.0 554.7" stroke="#e9e9c4" stroke-width="3.30"/><path d="M285.5 554.7L257.1 573.1" stroke="#ebeba6" stroke-width="2.10"/></g><path d="M167 466L317 388" stroke="#b03a3a" stroke-width="1" stroke-dasharray="1.2 1.8"/>
<rect x="164.5" y="463.5" width="5" height="5" fill="none" stroke="#e02020" stroke-width="1.2"/>
<rect x="428.5" y="493.5" width="5" height="5" fill="none" stroke="#40d040" stroke-width="1.2"/>
<g fill="none" stroke-width="1.6">
<path d="M276 410Q305 432 348 418" stroke="#1a2ab0"/>
<path d="M319 423Q330 438 344 432Q350 425 348 418" stroke="#e02020"/>
<path d="M275 413Q284 429 308 429" stroke="#40c040" stroke-width="2.6"/>
<path d="M317 388V354" stroke="#1a2ab0" stroke-width="1.3"/>
<path d="M317 388L292 363" stroke="#40c040" stroke-width="1.3"/>
<path d="M317 388L354 370" stroke="#e02020" stroke-width="1.3"/>
<path d="M323 361L327 355L334 352L330 358Z" stroke="#b05030" stroke-width="0.8" fill="none"/>
</g>
<path d="M317 348l-3 7h6z" fill="#1a2ab0"/>
<path d="M288 358.5l2 7 5-5z" fill="#40c040"/>
<path d="M362 365.5l-7.5 0.8 3 5.5z" fill="#e02020"/>
<rect x="314" y="385" width="6" height="6" fill="#2a3ac0" stroke="#1a2ab0" stroke-width="1.2"/><circle cx="317" cy="388" r="1.3" fill="#fff"/>
</svg>
<div class="a" style="left:41px;top:103px;width:58px;height:14px;background:linear-gradient(#a9b3c5,#9fa5b2)"></div>
<div class="t" style="left:45.7px;top:104.76px;font-size:8.2px;color:#0e1530;font-weight:bold;transform:scaleX(0.882);transform-origin:0 0;">Perspective</div>
<div class="a" style="left:91px;top:104px;width:1px;height:10px;background:#14183a;"></div>
<svg style="left:0;top:0" width="120" height="120"><path d="M92.5 107.5h4.5l-2.25 2.5z" fill="#14183a"/></svg>
<div class="a" style="left:45.6px;top:633.5px;width:41.3px;height:10.5px;background:#fbfbfd;"></div>
<div class="a" style="left:88px;top:633.5px;width:20.75px;height:10.5px;background:#dedee2;"></div>
<div class="a" style="left:111.25px;top:633.5px;width:23.15px;height:10.5px;background:#dedee2;"></div>
<div class="a" style="left:138.75px;top:633.5px;width:23.15px;height:10.5px;background:#dedee2;"></div>
<div class="a" style="left:165px;top:633.5px;width:13px;height:10.5px;background:#e6e6ea;"></div>
<div class="t" style="left:46.9px;top:635.40px;font-size:7.5px;color:#222;transform:scaleX(0.957);transform-origin:0 0;">Perspective</div>
<div class="t" style="left:93.75px;top:635.40px;font-size:7.5px;color:#222;transform:scaleX(0.930);transform-origin:0 0;">Top</div>
<div class="t" style="left:115px;top:635.40px;font-size:7.5px;color:#222;transform:scaleX(1.000);transform-origin:0 0;">Front</div>
<div class="t" style="left:141.9px;top:635.40px;font-size:7.5px;color:#222;transform:scaleX(1.000);transform-origin:0 0;">Right</div>
<svg style="left:0;top:0" width="200" height="675"><path d="M169 638.75h4.5M171.25 636.5v4.5" stroke="#777" stroke-width="1.4"/></svg>
<svg style="left:0;top:0" width="600" height="675"><rect x="6.6" y="651.5" width="7.5" height="7.5" fill="#fff" stroke="#4a4a4a" stroke-width="1"/><path d="M7.8999999999999995 655l2 2.3 3.8-5" fill="none" stroke="#333" stroke-width="0.9"/><rect x="33.8" y="651.5" width="7.5" height="7.5" fill="#fff" stroke="#4a4a4a" stroke-width="1"/><path d="M35.099999999999994 655l2 2.3 3.8-5" fill="none" stroke="#333" stroke-width="0.9"/><rect x="63.9" y="651.5" width="7.5" height="7.5" fill="#fff" stroke="#4a4a4a" stroke-width="1"/><path d="M65.2 655l2 2.3 3.8-5" fill="none" stroke="#333" stroke-width="0.9"/><rect x="95.9" y="651.5" width="7.5" height="7.5" fill="#fff" stroke="#4a4a4a" stroke-width="1"/><path d="M97.2 655l2 2.3 3.8-5" fill="none" stroke="#333" stroke-width="0.9"/><rect x="122.7" y="651.5" width="7.5" height="7.5" fill="#fff" stroke="#4a4a4a" stroke-width="1"/><rect x="151.1" y="651.5" width="7.5" height="7.5" fill="#fff" stroke="#4a4a4a" stroke-width="1"/><path d="M152.4 655l2 2.3 3.8-5" fill="none" stroke="#333" stroke-width="0.9"/><rect x="173.9" y="651.5" width="7.5" height="7.5" fill="#fff" stroke="#4a4a4a" stroke-width="1"/><path d="M175.20000000000002 655l2 2.3 3.8-5" fill="none" stroke="#333" stroke-width="0.9"/><rect x="202.8" y="651.5" width="7.5" height="7.5" fill="#fff" stroke="#4a4a4a" stroke-width="1"/><rect x="229.25" y="651.5" width="7.5" height="7.5" fill="#fff" stroke="#4a4a4a" stroke-width="1"/><path d="M230.55 655l2 2.3 3.8-5" fill="none" stroke="#333" stroke-width="0.9"/><rect x="261.5" y="651.5" width="7.5" height="7.5" fill="#fff" stroke="#4a4a4a" stroke-width="1"/><rect x="290.5" y="651.5" width="7.5" height="7.5" fill="#fff" stroke="#4a4a4a" stroke-width="1"/><path d="M291.8 655l2 2.3 3.8-5" fill="none" stroke="#333" stroke-width="0.9"/><rect x="328.0" y="651.5" width="7.5" height="7.5" fill="#fff" stroke="#c8c8cc" stroke-width="1"/><rect x="370.0" y="651.5" width="7.5" height="7.5" fill="#fff" stroke="#c8c8cc" stroke-width="1"/></svg>
<div class="t" style="left:16.6px;top:651.95px;font-size:7.5px;color:#222;transform:scaleX(0.854);transform-origin:0 0;">End</div>
<div class="t" style="left:43.4px;top:651.95px;font-size:7.5px;color:#222;transform:scaleX(0.941);transform-origin:0 0;">Near</div>
<div class="t" style="left:73.2px;top:651.95px;font-size:7.5px;color:#222;transform:scaleX(1.024);transform-origin:0 0;">Point</div>
<div class="t" style="left:105px;top:651.95px;font-size:7.5px;color:#222;transform:scaleX(1.076);transform-origin:0 0;">Mid</div>
<div class="t" style="left:132.7px;top:651.95px;font-size:7.5px;color:#222;transform:scaleX(0.923);transform-origin:0 0;">Cen</div>
<div class="t" style="left:159.7px;top:651.95px;font-size:7.5px;color:#222;transform:scaleX(1.115);transform-origin:0 0;">Int</div>
<div class="t" style="left:183px;top:651.95px;font-size:7.5px;color:#222;transform:scaleX(0.941);transform-origin:0 0;">Perp</div>
<div class="t" style="left:212.5px;top:651.95px;font-size:7.5px;color:#222;transform:scaleX(0.930);transform-origin:0 0;">Tan</div>
<div class="t" style="left:238.75px;top:651.95px;font-size:7.5px;color:#222;transform:scaleX(0.954);transform-origin:0 0;">Quad</div>
<div class="t" style="left:271px;top:651.95px;font-size:7.5px;color:#222;transform:scaleX(0.972);transform-origin:0 0;">Knot</div>
<div class="t" style="left:301px;top:651.95px;font-size:7.5px;color:#222;transform:scaleX(0.941);transform-origin:0 0;">Vertex</div>
<div class="t" style="left:336px;top:651.95px;font-size:7.5px;color:#222;transform:scaleX(0.985);transform-origin:0 0;">Project</div>
<div class="t" style="left:378.75px;top:651.95px;font-size:7.5px;color:#222;transform:scaleX(0.950);transform-origin:0 0;">Disable</div>
<div class="a" style="left:2px;top:662px;width:597px;height:12px;background:#f0f0f3;"></div>
<div class="a" style="left:2px;top:662px;width:597px;height:1px;background:#dcdce0;"></div>
<div class="a" style="left:28px;top:663px;width:1px;height:11px;background:#d6d6da;"></div>
<div class="a" style="left:77px;top:663px;width:1px;height:11px;background:#d6d6da;"></div>
<div class="a" style="left:128px;top:663px;width:1px;height:11px;background:#d6d6da;"></div>
<div class="a" style="left:178px;top:663px;width:1px;height:11px;background:#d6d6da;"></div>
<div class="a" style="left:225px;top:663px;width:1px;height:11px;background:#d6d6da;"></div>
<div class="a" style="left:320px;top:663px;width:1px;height:11px;background:#d6d6da;"></div>
<div class="a" style="left:355px;top:663px;width:1px;height:11px;background:#d6d6da;"></div>
<div class="a" style="left:380px;top:663px;width:1px;height:11px;background:#d6d6da;"></div>
<div class="a" style="left:407px;top:663px;width:1px;height:11px;background:#d6d6da;"></div>
<div class="a" style="left:433px;top:663px;width:1px;height:11px;background:#d6d6da;"></div>
<div class="a" style="left:476px;top:663px;width:1px;height:11px;background:#d6d6da;"></div>
<div class="a" style="left:507.5px;top:663px;width:1px;height:11px;background:#d6d6da;"></div>
<div class="a" style="left:559px;top:663px;width:1px;height:11px;background:#d6d6da;"></div>
<div class="a" style="left:581px;top:663px;width:1px;height:11px;background:#d6d6da;"></div>
<div class="a" style="left:588px;top:663px;width:1px;height:11px;background:#d6d6da;"></div>
<div class="a" style="left:228px;top:665px;width:8px;height:8px;background:#111;"></div>
<div class="t" style="left:2.6px;top:664.95px;font-size:7.5px;color:#222;transform:scaleX(0.927);transform-origin:0 0;">CPlane</div>
<div class="t" style="left:36.8px;top:664.95px;font-size:7.5px;color:#222;transform:scaleX(0.895);transform-origin:0 0;">x 1228.220</div>
<div class="t" style="left:87.6px;top:664.95px;font-size:7.5px;color:#222;transform:scaleX(0.902);transform-origin:0 0;">y 146.719</div>
<div class="t" style="left:141.5px;top:664.95px;font-size:7.5px;color:#222;transform:scaleX(0.870);transform-origin:0 0;">z 0.000</div>
<div class="t" style="left:183px;top:664.95px;font-size:7.5px;color:#222;transform:scaleX(1.033);transform-origin:0 0;">Millimeters</div>
<div class="t" style="left:238px;top:664.95px;font-size:7.5px;color:#222;transform:scaleX(0.978);transform-origin:0 0;">Default</div>
<div class="t" style="left:322px;top:664.95px;font-size:7.5px;color:#222;transform:scaleX(0.925);transform-origin:0 0;">Grid Snap</div>
<div class="t" style="left:358.75px;top:664.95px;font-size:7.5px;color:#222;transform:scaleX(1.026);transform-origin:0 0;">Ortho</div>
<div class="t" style="left:383.75px;top:664.95px;font-size:7.5px;color:#222;transform:scaleX(0.957);transform-origin:0 0;">Planar</div>
<div class="t" style="left:410px;top:664.95px;font-size:7.5px;color:#222;font-weight:bold;transform:scaleX(0.911);transform-origin:0 0;">Osnap</div>
<div class="t" style="left:435px;top:664.95px;font-size:7.5px;color:#222;font-weight:bold;transform:scaleX(0.967);transform-origin:0 0;">SmartTrack</div>
<div class="t" style="left:477px;top:664.95px;font-size:7.5px;color:#222;font-weight:bold;transform:scaleX(0.958);transform-origin:0 0;">Gumball</div>
<div class="t" style="left:509.5px;top:664.95px;font-size:7.5px;color:#222;transform:scaleX(0.968);transform-origin:0 0;">Record History</div>
<div class="t" style="left:562.5px;top:664.95px;font-size:7.5px;color:#222;transform:scaleX(0.975);transform-origin:0 0;">Filter</div>
<div class="t" style="left:583px;top:664.95px;font-size:7.5px;color:#222;transform:scaleX(0.800);transform-origin:0 0;">A</div>
<div class="a" style="left:601px;top:0px;width:599px;height:675px;background:#f0f0f0;"></div>
<div class="a" style="left:601px;top:0px;width:599px;height:19px;background:#fff;"></div>
<div class="a" style="left:601px;top:19px;width:599px;height:33px;background:#f3f3f4;"></div>
<div class="a" style="left:601px;top:51px;width:597px;height:53px;background:linear-gradient(#f2f1f4 0%,#e5e4e7 75%,#f2f2f4 100%)"></div>
<div class="a" style="left:601px;top:104px;width:597px;height:1px;background:#9a9a9a;"></div>
<div class="a" style="left:601px;top:105px;width:597px;height:20px;background:#f7f7f7;"></div>
<div class="a" style="left:601px;top:125px;width:597px;height:535px;background:#d2cac7;"></div>
<div class="a" style="left:748px;top:315px;width:450px;height:345px;background:#d8d0cc;"></div>
<div class="a" style="left:748.5px;top:315.2px;width:449.5px;height:1px;background:#e6dfdb;"></div>
<div class="a" style="left:748.2px;top:315px;width:1px;height:345px;background:#e6dfdb;"></div>
<div class="a" style="left:1197.5px;top:125px;width:1px;height:535px;background:#f4f4f4;"></div>
<div class="a" style="left:601px;top:660px;width:597px;height:14px;background:#f0f0f0;"></div>
<div class="t" style="left:605.8px;top:6.95px;font-size:7.5px;color:#222;transform:scaleX(0.971);transform-origin:0 0;">Grasshopper - cube*</div>
<div class="t" style="left:608.7px;top:24.85px;font-size:7.5px;color:#1a1a1a;transform:scaleX(0.935);transform-origin:0 0;">File</div>
<div class="t" style="left:631.7px;top:24.85px;font-size:7.5px;color:#1a1a1a;transform:scaleX(0.952);transform-origin:0 0;">Edit</div>
<div class="t" style="left:656px;top:24.85px;font-size:7.5px;color:#1a1a1a;transform:scaleX(0.993);transform-origin:0 0;">View</div>
<div class="t" style="left:683.7px;top:24.85px;font-size:7.5px;color:#1a1a1a;transform:scaleX(0.948);transform-origin:0 0;">Display</div>
<div class="t" style="left:719.7px;top:24.85px;font-size:7.5px;color:#1a1a1a;transform:scaleX(1.007);transform-origin:0 0;">Solution</div>
<div class="t" style="left:758.7px;top:24.85px;font-size:7.5px;color:#1a1a1a;transform:scaleX(0.992);transform-origin:0 0;">Help</div>
<div class="a" style="left:601px;top:50px;width:597px;height:1px;background:#d4d4d8;"></div>
<div class="a" style="left:747.7px;top:36.5px;width:35px;height:15px;background:#fcfcfc;border:1px solid #b9b9bd;border-bottom:none;border-radius:3px 3px 0 0"></div>
<div class="t" style="left:605.5px;top:39.95px;font-size:7.5px;color:#8a8a8a;transform:scaleX(0.909);transform-origin:0 0;">Params</div>
<div class="t" style="left:640.7px;top:39.95px;font-size:7.5px;color:#8a8a8a;transform:scaleX(0.896);transform-origin:0 0;">Maths</div>
<div class="t" style="left:670px;top:39.95px;font-size:7.5px;color:#8a8a8a;transform:scaleX(0.900);transform-origin:0 0;">Sets</div>
<div class="t" style="left:694.5px;top:39.95px;font-size:7.5px;color:#8a8a8a;transform:scaleX(0.917);transform-origin:0 0;">Vector</div>
<div class="t" style="left:724px;top:39.95px;font-size:7.5px;color:#8a8a8a;transform:scaleX(0.950);transform-origin:0 0;">Curve</div>
<div class="t" style="left:752.5px;top:38.23px;font-size:8px;color:#111;transform:scaleX(0.907);transform-origin:0 0;">Surface</div>
<div class="t" style="left:788.6px;top:39.95px;font-size:7.5px;color:#8a8a8a;transform:scaleX(0.894);transform-origin:0 0;">Mesh</div>
<div class="t" style="left:815px;top:39.95px;font-size:7.5px;color:#8a8a8a;transform:scaleX(0.939);transform-origin:0 0;">Intersect</div>
<div class="t" style="left:853.8px;top:39.95px;font-size:7.5px;color:#8a8a8a;transform:scaleX(0.921);transform-origin:0 0;">Transform</div>
<div class="t" style="left:895px;top:39.95px;font-size:7.5px;color:#8a8a8a;transform:scaleX(0.923);transform-origin:0 0;">Dis</div>
<div class="t" style="left:916.6px;top:39.95px;font-size:7.5px;color:#8a8a8a;transform:scaleX(0.900);transform-origin:0 0;">Ladybug</div>
<div class="t" style="left:953.4px;top:39.95px;font-size:7.5px;color:#8a8a8a;transform:scaleX(0.924);transform-origin:0 0;">Honeybee</div>
<div class="t" style="left:995.5px;top:39.95px;font-size:7.5px;color:#8a8a8a;transform:scaleX(1.201);transform-origin:0 0;">W</div>
<svg style="left:0;top:0" width="1200" height="100"><defs><linearGradient id="org" x1="0" y1="0" x2="0" y2="1"><stop offset="0" stop-color="#fcc040"/><stop offset="1" stop-color="#e06a00"/></linearGradient></defs><rect x="602.5" y="52.5" width="115.0" height="44.5" rx="2.5" fill="#e4e4e6" stroke="#b4b4b8" stroke-width="0.8"/><path d="M602.5 88.5H717.5V94.5a2.5 2.5 0 0 1-2.5 2.5H605.0a2.5 2.5 0 0 1-2.5-2.5z" fill="#1c1c1e"/><path d="M712.0 92.8h3.5M713.75 91v3.5" stroke="#888" stroke-width="0.9"/><path d="M624.15 57v27" stroke="#cfcfd3" stroke-width="0.8"/><path d="M648.15 57v27" stroke="#cfcfd3" stroke-width="0.8"/><path d="M672.0 57v27" stroke="#cfcfd3" stroke-width="0.8"/><path d="M695.4 57v27" stroke="#cfcfd3" stroke-width="0.8"/><rect x="720" y="52.5" width="67.79999999999995" height="44.5" rx="2.5" fill="#e4e4e6" stroke="#b4b4b8" stroke-width="0.8"/><path d="M720 88.5H787.8V94.5a2.5 2.5 0 0 1-2.5 2.5H722.5a2.5 2.5 0 0 1-2.5-2.5z" fill="#1c1c1e"/><path d="M782.3 92.8h3.5M784.05 91v3.5" stroke="#888" stroke-width="0.9"/><path d="M741.2 57v27" stroke="#cfcfd3" stroke-width="0.8"/><path d="M765.5 57v27" stroke="#cfcfd3" stroke-width="0.8"/><rect x="790.6" y="52.5" width="43.60000000000002" height="44.5" rx="2.5" fill="#e4e4e6" stroke="#b4b4b8" stroke-width="0.8"/><path d="M790.6 88.5H834.2V94.5a2.5 2.5 0 0 1-2.5 2.5H793.1a2.5 2.5 0 0 1-2.5-2.5z" fill="#1c1c1e"/><path d="M828.7 92.8h3.5M830.45 91v3.5" stroke="#888" stroke-width="0.9"/><path d="M811.85 57v27" stroke="#cfcfd3" stroke-width="0.8"/><rect x="837" y="52.5" width="67.39999999999998" height="44.5" rx="2.5" fill="#e4e4e6" stroke="#b4b4b8" stroke-width="0.8"/><path d="M837 88.5H904.4V94.5a2.5 2.5 0 0 1-2.5 2.5H839.5a2.5 2.5 0 0 1-2.5-2.5z" fill="#1c1c1e"/><path d="M898.9 92.8h3.5M900.65 91v3.5" stroke="#888" stroke-width="0.9"/><path d="M857.85 57v27" stroke="#cfcfd3" stroke-width="0.8"/><path d="M881.55 57v27" stroke="#cfcfd3" stroke-width="0.8"/><g transform="translate(612.5,62) scale(1.12)"><path d="M-5-2l5-3 5 2v6l-5 3-5-2z" fill="#dce8f4" stroke="#c03a20" stroke-width="1"/><path d="M-5-2l5 2 5-3M0 0v6" fill="none" stroke="#c03a20" stroke-width="0.8"/></g><g transform="translate(612.5,79.5) scale(1.12)"><circle r="5.5" fill="#c84830" stroke="#701810" stroke-width="0.8"/><circle cx="0" cy="0.5" r="2.8" fill="#eee"/><path d="M-5-4l2 1.5 1.5-3 1.5 3 2-3 1 3 2-1" fill="none" stroke="#701810" stroke-width="0.8"/></g><g transform="translate(635.8,62) scale(1.12)"><text x="-6.5" y="3" font-family="Liberation Serif" font-weight="bold" font-style="italic" font-size="11" fill="#111">m</text><text x="3.5" y="-2" font-family="Liberation Serif" font-weight="bold" font-style="italic" font-size="5.5" fill="#111">2</text></g><g transform="translate(635.8,79.5) scale(1.12)"><text x="-6.5" y="3" font-family="Liberation Serif" font-weight="bold" font-style="italic" font-size="11" fill="#111">m</text><text x="3.5" y="-2" font-family="Liberation Serif" font-weight="bold" font-style="italic" font-size="5.5" fill="#111">3</text></g><g transform="translate(660.5,62) scale(1.12)"><path d="M-3-1l5-3 4 4-1 5-4 1-4-3z" fill="url(#org)" stroke="#6a3a00" stroke-width="0.7"/><path d="M-3-1l-2-3" stroke="#333" stroke-width="0.7"/><circle cx="-5" cy="-4.5" r="1.2" fill="#fff" stroke="#333" stroke-width="0.6"/></g><g transform="translate(660.5,79.5) scale(1.12)"><path d="M-6 0l6-3h5v8h-5l-6-2z" fill="url(#org)" stroke="#6a3a00" stroke-width="0.7"/><path d="M2-3v-3" stroke="#333" stroke-width="0.7"/><circle cx="2" cy="-6" r="1.1" fill="#fff" stroke="#333" stroke-width="0.5"/></g><g transform="translate(683.5,62) scale(1.12)"><rect x="-6" y="-5" width="9" height="10" rx="2" fill="#d6d8d4" stroke="#555" stroke-width="0.8"/><path d="M-3 0l2 0" stroke="#2a8a2a" stroke-width="2"/><path d="M4 -1l3 3M7-1l-3 3" stroke="#c02020" stroke-width="0.9"/></g><g transform="translate(683.5,79.5) scale(1.12)"><path d="M-5-3l4-2v9l-4 2z" fill="url(#org)" stroke="#5a3000" stroke-width="0.6"/><path d="M-1-5h5v10h-5z" fill="#eee" stroke="#555" stroke-width="0.6"/></g><g transform="translate(707.3,62) scale(1.12)"><path d="M-5 4Q-5-3 0-3T5 4z" fill="url(#org)" stroke="#803000" stroke-width="0.7"/><path d="M1-3l3-4" stroke="#111" stroke-width="0.9"/></g><g transform="translate(707.3,79.5) scale(1.12)"><path d="M-5-1l5-3 5 3v5l-5-2-5 2z" fill="#8060d0" stroke="#303080" stroke-width="0.6"/><path d="M-3-1l3-3 3 3z" fill="#e03060"/></g><g transform="translate(729.4,62) scale(1.12)"><path d="M-5-5l7 3 3 7-7-3z" fill="url(#org)" stroke="#333" stroke-width="0.7"/><circle cx="-5" cy="-5" r="1" fill="#fff" stroke="#333" stroke-width="0.5"/><circle cx="5" cy="5" r="1" fill="#fff" stroke="#333" stroke-width="0.5"/></g><g transform="translate(729.4,79.5) scale(1.12)"><rect x="-5" y="-5" width="10" height="10" fill="url(#org)" stroke="#7a4000" stroke-width="0.6"/><path d="M-5-5h10v10h-10z" fill="none" stroke="#333" stroke-dasharray="1.5 2.5" stroke-width="1.4"/></g><g transform="translate(753,62) scale(1.12)"><path d="M-5-6l5 3 5 4-5 4h-5z" fill="url(#org)" stroke="#7a3a00" stroke-width="0.7"/></g><g transform="translate(753,79.5) scale(1.12)"><path d="M-5-6q3 3 0 6t0 6M0-6q3 3 0 6t0 6M5-6q-3 3 0 6t0 6" fill="none" stroke="#222" stroke-width="1"/><path d="M-4-4h8v8h-8z" fill="#e8a010" opacity="0.85"/></g><g transform="translate(778,62) scale(1.12)"><path d="M-5 3l6-7 4 3-6 7z" fill="url(#org)" stroke="#7a3a00" stroke-width="0.7"/><path d="M-6 6l2-2M4-6l2-1" stroke="#222" stroke-width="1.2"/></g><g transform="translate(778,79.5) scale(1.12)"><path d="M-5 6Q-4-2 3-5l3 4Q-1 1-1 6z" fill="url(#org)" stroke="#7a3a00" stroke-width="0.7"/><path d="M2-6l4 1-1 3" fill="#111"/></g><g transform="translate(800,62) scale(1.12)"><path d="M-5-3l4-3 5 2v6l-4 3-5-2z" fill="url(#org)" stroke="#6a3a00" stroke-width="0.8"/><circle cx="0" cy="-1" r="2" fill="none" stroke="#6a3a00" stroke-width="0.6"/></g><g transform="translate(800,79.5) scale(1.12)"><path d="M-6 0q1-5 7-4 5 1 4 4-3 3-7 2z" fill="url(#org)" stroke="#6a3a00" stroke-width="0.7"/><rect x="1" y="1" width="5" height="5" fill="#fff" stroke="#333" stroke-width="0.7"/></g><g transform="translate(823.7,62) scale(1.12)"><path d="M-4-4v8a4 2 0 0 0 8 0v-8z" fill="url(#org)" stroke="#6a3a00" stroke-width="0.7"/><ellipse cx="0" cy="-4" rx="4" ry="1.8" fill="#f4c050" stroke="#6a3a00" stroke-width="0.6"/></g><g transform="translate(823.7,79.5) scale(1.12)"><circle r="5" fill="url(#org)" stroke="#6a3a00" stroke-width="0.7"/></g><g transform="translate(846,62) scale(1.12)"><path d="M-4-5h9l-3 10h-7z" fill="url(#org)" stroke="#6a3a00" stroke-width="0.7"/></g><g transform="translate(846,79.5) scale(1.12)"><path d="M-4-4h8v8h-8z" fill="url(#org)" stroke="#6a3a00" stroke-width="0.6"/><path d="M-5-5h10v10h-10z" fill="none" stroke="#222" stroke-dasharray="1.5 2.5" stroke-width="1.3"/></g><g transform="translate(869.7,62) scale(1.12)"><path d="M0-6v12M-5-2h10M-5 2h10" stroke="#c06010" stroke-width="1"/><rect x="-2" y="-4" width="4" height="8" fill="#f0a030"/></g><g transform="translate(869.7,79.5) scale(1.12)"><path d="M-5 0l5-2 5 2v4l-5 2-5-2z" fill="#999" stroke="#444" stroke-width="0.6"/><path d="M-3-4l3-3 3 3z" fill="url(#org)"/></g><g transform="translate(893.4,62) scale(1.12)"><rect x="-5" y="-5" width="8" height="8" fill="none" stroke="#444" stroke-width="0.7"/><path d="M-5 3v-8h8" fill="none" stroke="#d02020" stroke-width="0.9"/><circle cx="5" cy="5" r="1" fill="#fff" stroke="#333" stroke-width="0.5"/></g><g transform="translate(893.4,79.5) scale(1.12)"><path d="M-5-2l4-4h3l4 5-4 5h-7z" fill="url(#org)" stroke="#6a3a00" stroke-width="0.7"/><path d="M-1-1l3 3" stroke="#222" stroke-width="0.8"/></g></svg>
<div class="t" style="left:645px;top:88.95px;font-size:7.5px;color:#e8e8e8;font-weight:bold;transform:scaleX(0.778);transform-origin:0 0;">Analysis</div>
<div class="t" style="left:737.8px;top:88.95px;font-size:7.5px;color:#e8e8e8;font-weight:bold;transform:scaleX(0.800);transform-origin:0 0;">Freeform</div>
<div class="t" style="left:797px;top:88.95px;font-size:7.5px;color:#e8e8e8;font-weight:bold;transform:scaleX(0.723);transform-origin:0 0;">Primitive</div>
<div class="t" style="left:863px;top:88.95px;font-size:7.5px;color:#e8e8e8;font-weight:bold;transform:scaleX(0.662);transform-origin:0 0;">Util</div>
<div class="a" style="left:601px;top:105px;width:597px;height:20px;background:#f7f7f8;"></div>
<div class="a" style="left:601px;top:104px;width:597px;height:1.2px;background:#8c8c8c;"></div>
<div class="a" style="left:601px;top:124.5px;width:597px;height:0.8px;background:#e8e4e0;"></div>
<svg style="left:0;top:0" width="1200" height="130"><path d="M606 109h8v6h-8z" fill="#eee" stroke="#777" stroke-width="0.7"/><path d="M614.5 109v6" stroke="#333" stroke-width="0.9"/><path d="M604.3 115.5l4-0.8 2-1.7h5.8v9h-11.8z" fill="#62c848" stroke="#2a6a1a" stroke-width="0.8"/><rect x="622.5" y="108.5" width="13" height="13" rx="1" fill="#2050c0" stroke="#102a80" stroke-width="0.8"/><rect x="625" y="109" width="8" height="5" fill="#e8e8e8"/><rect x="625.5" y="116.5" width="7" height="5" fill="#9ab8e8"/><path d="M641 108v15" stroke="#d0d0d0" stroke-width="0.8"/><rect x="644.6" y="108" width="84.8" height="14" fill="#fff" stroke="#a8a8a8" stroke-width="0.8"/><path d="M721 114l2.5 2.5 2.5-2.5" fill="none" stroke="#444" stroke-width="0.8"/><path d="M733.5 112v-3.5h3.5M744 108.5h3.5v3.5M747.5 118.5v3.5h-3.5M737 122h-3.5v-3.5" fill="none" stroke="#111" stroke-width="1.6"/><rect x="739" y="113.5" width="3" height="3" fill="#111"/><path d="M750.5 114h3l-1.5 1.8z" fill="#222"/><path d="M759.5 115q7-7 14 0q-7 7-14 0z" fill="#cfe8f4" stroke="#1a6a9a" stroke-width="1.2"/><circle cx="766.5" cy="115" r="2.6" fill="#1a6a9a"/><path d="M776.5 114h3l-1.5 1.8z" fill="#222"/><path d="M786 121q-3-3 1-3t0-3" fill="none" stroke="#222" stroke-width="0.9"/><path d="M788 120l9-9 2 2-9 8z" fill="#c02a2a"/><rect x="1109.5" y="106.5" width="16.5" height="17" fill="#f4f8fa" stroke="#6a9ab4" stroke-width="0.8"/><rect x="1136.5" y="106.5" width="17.5" height="17" fill="#f4f8fa" stroke="#6a9ab4" stroke-width="0.8"/><path d="M1131.8 108v14M1173.8 108v14" stroke="#d4d4d4" stroke-width="0.8"/><g transform="rotate(-35 1081 115)"><rect x="1076" y="108" width="10" height="13" rx="4" fill="#ddd" stroke="#555" stroke-width="0.8"/><path d="M1076 116h10v1a4 4 0 0 1-10 0z" fill="#222"/></g><g transform="rotate(-35 1099 115)"><rect x="1094" y="108" width="10" height="13" rx="4" fill="#fafafa" stroke="#555" stroke-width="0.9"/><path d="M1096 111v7M1099 110v9" stroke="#777" stroke-width="0.6"/></g><g transform="rotate(-35 1117.5 115)"><rect x="1112.5" y="108" width="10" height="13" rx="4" fill="#c81818" stroke="#701010" stroke-width="0.8"/><path d="M1114 111h3" stroke="#f88" stroke-width="1"/></g><g transform="rotate(-35 1145 115)"><rect x="1140" y="108" width="10" height="13" rx="4" fill="#ddd" stroke="#555" stroke-width="0.8"/><path d="M1140 108h10v6h-10z" fill="#40a020"/></g><defs><linearGradient id="ow" x1="0" x2="1"><stop offset="0.45" stop-color="#e06010"/><stop offset="0.5" stop-color="#f4e0c0"/><stop offset="1" stop-color="#ddd"/></linearGradient><radialGradient id="bhex" cx="0.4" cy="0.4" r="0.6"><stop offset="0" stop-color="#cfe8ff"/><stop offset="1" stop-color="#4a90e0"/></radialGradient></defs><circle cx="1162.5" cy="115" r="6.3" fill="url(#ow)" stroke="#7a3a20" stroke-width="0.7"/><path d="M1183.7 108.5l5.5 3v6.5l-5.5 3-5.5-3v-6.5z" fill="url(#bhex)" stroke="#1a3a7a" stroke-width="1"/><path d="M1192.5 114h3l-1.5 1.8z" fill="#111"/></svg>
<div class="t" style="left:646.5px;top:111.80px;font-size:8.5px;color:#111;transform:scaleX(0.794);transform-origin:0 0;">20%</div>
<div class="a" style="left:747px;top:314px;width:451px;height:1.2px;background:#444;"></div>
<div class="a" style="left:747px;top:314px;width:1.2px;height:346px;background:#444;"></div>
<svg style="left:0;top:0" width="1200" height="675"><path d="M797.7 320.5H830Q845 320 859 309" fill="none" stroke="#5a5a5a" stroke-width="0.7"/><path d="M797.7 321Q835 318 859 312" fill="none" stroke="#5a5a5a" stroke-width="0.7"/><path d="M773.3 322.5L781 320" fill="none" stroke="#5a5a5a" stroke-width="0.7"/><path d="M829.7 324.5L835.7 324" fill="none" stroke="#5a5a5a" stroke-width="0.7"/><path d="M852.7 325Q860 325 858 316Q856 311 859 311" fill="none" stroke="#5a5a5a" stroke-width="0.7"/><path d="M873.7 308Q890 300 906 291" fill="none" stroke="#5a5a5a" stroke-width="0.7"/><path d="M873.7 311H880M887.7 311.5H925" fill="none" stroke="#5a5a5a" stroke-width="0.7"/><path d="M873.7 314H894.3" fill="none" stroke="#5a5a5a" stroke-width="0.7"/><path d="M914 320.5Q920 318 925 314" fill="none" stroke="#5a5a5a" stroke-width="0.7"/><path d="M931.7 291.5H939.7M956.7 291H961.3M978.5 289.5H984M995.5 289H1014M1032.5 289.5H1042.5" fill="none" stroke="#5a5a5a" stroke-width="0.7"/><path d="M1007.5 299Q1010 291 1014 290" fill="none" stroke="#5a5a5a" stroke-width="0.7"/><path d="M997.5 314Q1020 314 1030 303Q1035 297 1042.5 296" fill="none" stroke="#5a5a5a" stroke-width="0.7"/><path d="M943.5 312H980.5M943.5 313H980.5" fill="none" stroke="#5a5a5a" stroke-width="0.7"/><path d="M975.5 320Q978 316 980.5 316" fill="none" stroke="#5a5a5a" stroke-width="0.7"/><path d="M952.5 321H959" fill="none" stroke="#5a5a5a" stroke-width="0.7"/><rect x="781" y="317.3" width="16.700000000000045" height="11.0" fill="#9c9ca6" stroke="#4a4a50" stroke-width="0.9"/><rect x="786.7" y="317.3" width="3.2999999999999545" height="11.0" fill="#26262c"/><rect x="748" y="321.2" width="25.299999999999955" height="3.1000000000000227" rx="0.8" fill="#e0dede" stroke="#555" stroke-width="0.8"/><rect x="748" y="321.2" width="10" height="3.1000000000000227" fill="#888"/><rect x="804.3" y="322" width="25.40000000000009" height="2.8000000000000114" rx="0.8" fill="#e0dede" stroke="#555" stroke-width="0.8"/><rect x="804.3" y="322" width="9.700000000000045" height="2.8000000000000114" fill="#888"/><rect x="804.3" y="325" width="25.40000000000009" height="2.6999999999999886" rx="0.8" fill="#e0dede" stroke="#555" stroke-width="0.8"/><rect x="804.3" y="325" width="9.700000000000045" height="2.6999999999999886" fill="#888"/><rect x="835.7" y="319" width="17.0" height="11.699999999999989" fill="#9c9ca6" stroke="#4a4a50" stroke-width="0.9"/><rect x="841" y="319" width="4" height="11.699999999999989" fill="#26262c"/><rect x="859" y="306" width="14.700000000000045" height="10.699999999999989" fill="#9c9ca6" stroke="#4a4a50" stroke-width="0.9"/><rect x="866" y="306" width="3" height="10.699999999999989" fill="#26262c"/><rect x="880" y="310.3" width="7.7" height="2.4" rx="1.2" fill="#ddd" stroke="#444" stroke-width="0.8"/><rect x="894.3" y="311.7" width="17.40000000000009" height="6.0" fill="#9c9ca6" stroke="#4a4a50" stroke-width="0.9"/><rect x="901" y="311.7" width="4" height="6.0" fill="#26262c"/><rect x="888.7" y="319" width="25.299999999999955" height="2.6999999999999886" rx="0.8" fill="#e0dede" stroke="#555" stroke-width="0.8"/><rect x="888.7" y="319" width="9.299999999999955" height="2.6999999999999886" fill="#888"/><rect x="925" y="310" width="18.299999999999955" height="7.699999999999989" fill="#9c9ca6" stroke="#4a4a50" stroke-width="0.9"/><rect x="932" y="310" width="4" height="7.699999999999989" fill="#26262c"/><rect x="927.3" y="319.3" width="25.200000000000045" height="3.0" rx="0.8" fill="#e0dede" stroke="#555" stroke-width="0.8"/><rect x="927.3" y="319.3" width="9.700000000000045" height="3.0" fill="#888"/><rect x="906.3" y="290.2" width="25.40000000000009" height="2.6999999999999886" rx="0.8" fill="#e0dede" stroke="#555" stroke-width="0.8"/><rect x="906.3" y="290.2" width="10.700000000000045" height="2.6999999999999886" fill="#888"/><rect x="939.7" y="288" width="17.0" height="6.899999999999977" fill="#9c9ca6" stroke="#4a4a50" stroke-width="0.9"/><rect x="945" y="288" width="3" height="6.899999999999977" fill="#26262c"/><rect x="961.5" y="285.5" width="17.0" height="8.5" fill="#9c9ca6" stroke="#4a4a50" stroke-width="0.9"/><rect x="968" y="285.5" width="4" height="8.5" fill="#26262c"/><rect x="984" y="285" width="11.5" height="9.5" fill="#9c9ca6" stroke="#4a4a50" stroke-width="0.9"/><rect x="988" y="285" width="4" height="9.5" fill="#26262c"/><rect x="991" y="296.2" width="16.5" height="6.800000000000011" fill="#9c9ca6" stroke="#4a4a50" stroke-width="0.9"/><rect x="996" y="296.2" width="4" height="6.800000000000011" fill="#26262c"/><rect x="1014" y="288" width="18.5" height="6.5" fill="#e2e2e2" stroke="#4a4a50" stroke-width="0.9"/><rect x="1021" y="288" width="4" height="6.5" fill="#26262c"/><rect x="1042.5" y="286" width="15.0" height="14.5" fill="#e2e2e2" stroke="#4a4a50" stroke-width="0.9"/><rect x="1049" y="286" width="4" height="14.5" fill="#26262c"/><rect x="980.5" y="310" width="17.0" height="7.5" fill="#e2e2e2" stroke="#4a4a50" stroke-width="0.9"/><rect x="987" y="310" width="4" height="7.5" fill="#26262c"/><rect x="959" y="317.5" width="16.5" height="7.0" fill="#9c9ca6" stroke="#4a4a50" stroke-width="0.9"/><rect x="963" y="317.5" width="5" height="7.0" fill="#26262c"/><path d="M902.5 300.5v10l2.5-2.2 2 3.5 1.5-.8-2-3.3h3.5z" fill="#fff" stroke="#333" stroke-width="0.7"/></svg>
<svg style="left:0;top:0" width="1200" height="675"><defs><radialGradient id="cmp" cx="0.45" cy="0.5" r="0.55"><stop offset="0" stop-color="#f4f4f4"/><stop offset="1" stop-color="#b4b4b4"/></radialGradient></defs><circle cx="1170" cy="631.5" r="12.3" fill="url(#cmp)" stroke="#222" stroke-width="1"/><circle cx="1170" cy="631.5" r="10.5" fill="none" stroke="#fff" stroke-width="0.8" stroke-dasharray="6 2.3"/><path d="M1155 619.5l4 1 1.5-1.5 1 4.5-4.5-1z" fill="#111"/><path d="M1159 621q5-4 10-3.5" fill="none" stroke="#111" stroke-width="1.6"/></svg>
<div class="a" style="left:602px;top:641.5px;width:92px;height:17.5px;background:linear-gradient(#cfcfcf,#bdbdbd);border:1px solid #555"></div>
<svg style="left:0;top:0" width="1200" height="675"><rect x="604" y="643.5" width="14" height="13" fill="#9c9c9c" stroke="#333" stroke-width="0.8"/><path d="M611 645v7M608.5 649.5l2.5 3 2.5-3z" stroke="#111" fill="#111" stroke-width="1.2"/><path d="M605.5 654.5h11" stroke="#111" stroke-width="1.2" stroke-dasharray="1 0.6"/><rect x="621.5" y="643.3" width="14.5" height="13.5" fill="#f6c838" stroke="#332" stroke-width="0.8"/><g fill="none" stroke="#b06000" stroke-width="1.3"><path d="M624.5 654.5q1-2 2.5-2.5M625 651q3-1 4-4M627.5 654.5q3-2 4-6M630.5 655q3-3 3.5-8"/></g><rect x="640" y="644.5" width="11" height="11" fill="#f2f2f2" stroke="#666" stroke-width="0.7"/><path d="M642 654l6-9" stroke="#111" stroke-width="1.3"/><text x="641" y="649" font-size="4.5" font-family="Liberation Sans" fill="#111">P</text><text x="647" y="655" font-size="4.5" font-family="Liberation Sans" fill="#111">B</text><circle cx="662.5" cy="652.5" r="4.2" fill="#b8b8b8" stroke="#444" stroke-width="0.8"/><circle cx="661.5" cy="653.5" r="2" fill="#eee"/><path d="M657.5 648l5-3.5 5 3.5-5 2.5z" fill="#f08a20" stroke="#803a00" stroke-width="0.5"/><path d="M677 644h9l4.5 6-4.5 6h-9l-4.5-6z" fill="#111"/><circle cx="681.5" cy="650" r="3.8" fill="none" stroke="#aaa" stroke-width="1"/><circle cx="681.5" cy="650" r="2" fill="none" stroke="#888" stroke-width="0.8"/></svg>
<div class="a" style="left:601px;top:659.5px;width:597px;height:15px;background:#f1f1f3;"></div>
<svg style="left:0;top:0" width="1200" height="675"><circle cx="608" cy="667.5" r="4.6" fill="#2a56b8" stroke="#1a2a70" stroke-width="0.6"/><path d="M607 665q2 0 1.5 2t1 2.5" stroke="#cde" stroke-width="0.8" fill="none"/><g fill="#bbb"><rect x="1194" y="665" width="1" height="1"/><rect x="1192" y="667" width="1" height="1"/><rect x="1194" y="667" width="1" height="1"/><rect x="1190" y="669" width="1" height="1"/><rect x="1192" y="669" width="1" height="1"/><rect x="1194" y="669" width="1" height="1"/></g></svg>
<div class="t" style="left:615px;top:664.65px;font-size:7.5px;color:#222;transform:scaleX(0.973);transform-origin:0 0;">Autosave complete (220 seconds ago)</div>
<div class="t" style="left:1153.5px;top:664.65px;font-size:7.5px;color:#777;transform:scaleX(0.925);transform-origin:0 0;">1.0.0007</div>
<div class="a" style="left:0px;top:0px;width:1200px;height:1px;background:#3c3c3c;"></div>
<div class="a" style="left:0px;top:674px;width:1200px;height:1px;background:#3c3c3c;"></div>
<div class="a" style="left:0px;top:0px;width:1.2px;height:675px;background:#333;"></div>
<div class="a" style="left:1.2px;top:0px;width:1px;height:675px;background:#9a9a9e;"></div>
<div class="a" style="left:599px;top:0px;width:2px;height:675px;background:#444;"></div>
<div class="a" style="left:1198px;top:0px;width:2px;height:675px;background:#444;"></div>
<div class="a" style="left:1005px;top:4px;width:178px;height:46.5px;background:#1b1d21;border-radius:3px;overflow:hidden;box-shadow:0 0 2px rgba(0,0,0,0.4)">
<div class="a" style="left:0;top:22px;width:178px;height:25px;background:#222933"></div>
</div>
<svg style="left:0;top:0" width="1200" height="60"><rect x="1011" y="17" width="10" height="2" fill="#3a8ee6"/><rect x="1032.5" y="13.5" width="9.5" height="6.5" fill="#c8c8c8"/><rect x="1054" y="10" width="10" height="4.5" fill="#c8c8c8"/><rect x="1054" y="15.5" width="10" height="4.5" fill="#c8c8c8"/><g fill="#c8c8c8"><rect x="1076" y="9" width="3" height="3"/><rect x="1080" y="9" width="3" height="3"/><rect x="1084" y="9" width="3" height="3"/><rect x="1076" y="13" width="3" height="3"/><rect x="1080" y="13" width="3" height="3"/><rect x="1084" y="13" width="3" height="3"/><rect x="1076" y="17" width="3" height="3"/><rect x="1080" y="17" width="3" height="3"/><rect x="1084" y="17" width="3" height="3"/></g><path d="M1166 10h7v-0h6v9h-13z" fill="#c8c8c8"/><rect x="1173" y="10" width="6" height="3.5" fill="#1b1d21"/><rect x="1174" y="10.5" width="4.5" height="2.5" fill="#c8c8c8"/></svg>
<div class="t" style="left:1020px;top:32.78px;font-size:10.3px;color:#d9dbde;transform:scaleX(0.950);transform-origin:0 0;">Talking: Archidiaries</div>
<svg style="left:0;top:0" width="1200" height="60"><path d="M1183 7l5 5M1188 7l-5 5" stroke="#666" stroke-width="0.9"/></svg>
<div class="t" style="left:1183px;top:24.65px;font-size:7.5px;color:#111;transform:scaleX(0.799);transform-origin:0 0;">ube</div>
</div></body></html>
